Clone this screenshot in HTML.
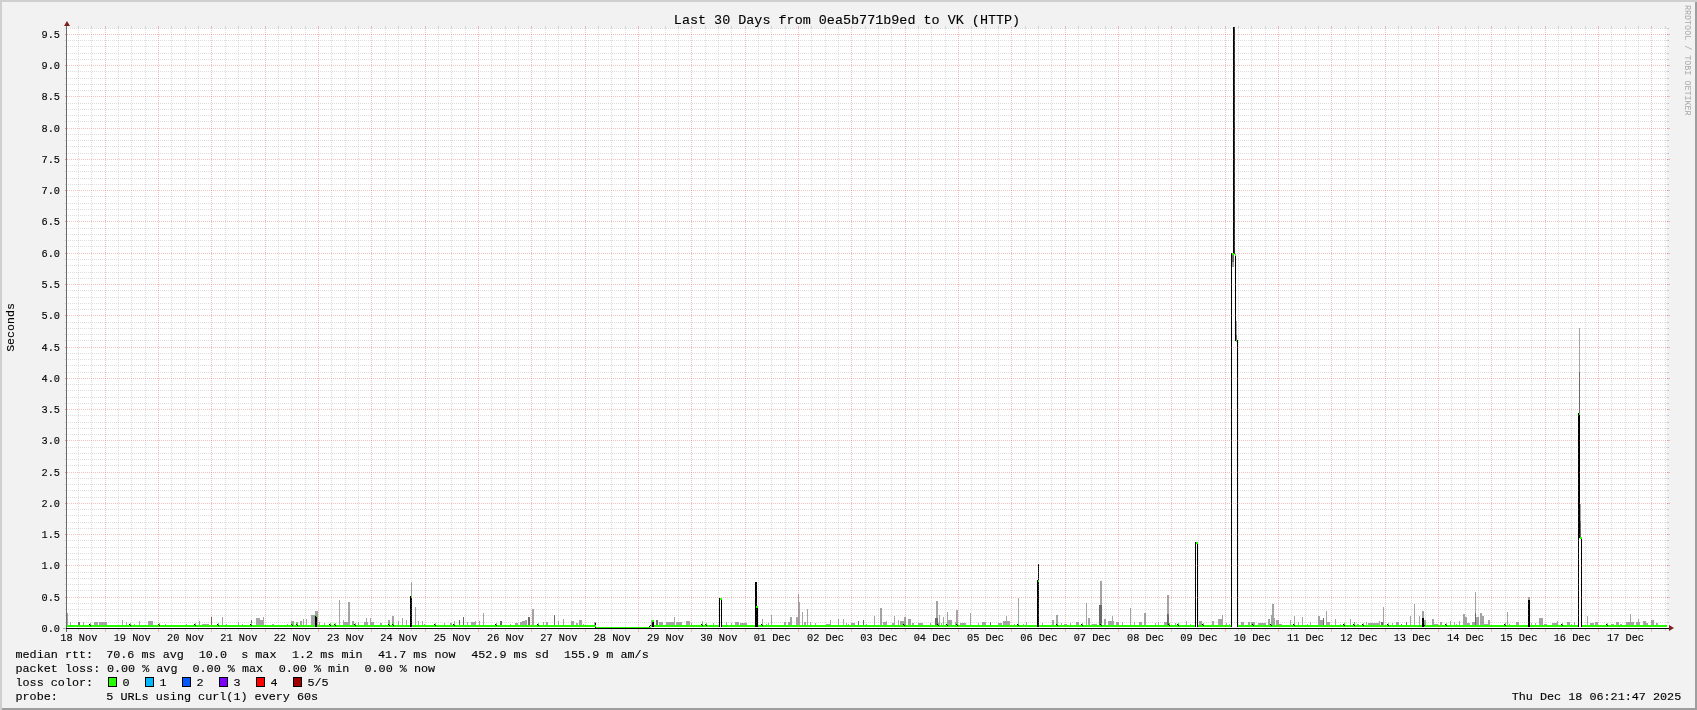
<!DOCTYPE html>
<html><head><meta charset="utf-8"><style>html,body{margin:0;padding:0;background:#f2f2f2;overflow:hidden}svg text{font-family:"Liberation Mono",monospace}svg{will-change:transform}</style></head>
<body><svg width="1697" height="710" viewBox="0 0 1697 710" shape-rendering="crispEdges" style="display:block">
<rect x="0" y="0" width="1697" height="710" fill="#f2f2f2"/>
<rect x="0" y="0" width="1697" height="2" fill="#cfcfcf"/>
<rect x="0" y="0" width="2" height="710" fill="#cfcfcf"/>
<rect x="1695" y="2" width="2" height="708" fill="#9e9e9e"/>
<rect x="2" y="708" width="1695" height="2" fill="#9e9e9e"/>
<rect x="67" y="28" width="1600" height="600" fill="#ffffff"/>
<rect x="67" y="613" width="1" height="12" fill="#a4a4a4"/><rect x="70" y="622" width="1" height="3" fill="#a4a4a4"/><rect x="83" y="622" width="1" height="3" fill="#a4a4a4"/><rect x="94" y="622" width="4" height="3" fill="#a4a4a4"/><rect x="99" y="622" width="8" height="3" fill="#a4a4a4"/><rect x="122" y="620" width="1" height="5" fill="#a4a4a4"/><rect x="126" y="622" width="1" height="3" fill="#a4a4a4"/><rect x="134" y="624" width="1" height="1" fill="#a4a4a4"/><rect x="139" y="621" width="1" height="4" fill="#a4a4a4"/><rect x="148" y="621" width="5" height="4" fill="#a4a4a4"/><rect x="165" y="624" width="1" height="1" fill="#a4a4a4"/><rect x="186" y="624" width="1" height="1" fill="#a4a4a4"/><rect x="199" y="621" width="1" height="4" fill="#a4a4a4"/><rect x="202" y="624" width="7" height="1" fill="#a4a4a4"/><rect x="222" y="617" width="1" height="8" fill="#a4a4a4"/><rect x="226" y="624" width="1" height="1" fill="#a4a4a4"/><rect x="238" y="622" width="1" height="3" fill="#a4a4a4"/><rect x="242" y="624" width="1" height="1" fill="#a4a4a4"/><rect x="256" y="618" width="4" height="7" fill="#a4a4a4"/><rect x="260" y="620" width="3" height="5" fill="#a4a4a4"/><rect x="263" y="617" width="1" height="8" fill="#a4a4a4"/><rect x="272" y="624" width="2" height="1" fill="#a4a4a4"/><rect x="287" y="624" width="1" height="1" fill="#a4a4a4"/><rect x="291" y="621" width="3" height="4" fill="#a4a4a4"/><rect x="296" y="622" width="2" height="3" fill="#a4a4a4"/><rect x="300" y="621" width="2" height="4" fill="#a4a4a4"/><rect x="303" y="619" width="1" height="6" fill="#a4a4a4"/><rect x="306" y="619" width="1" height="6" fill="#a4a4a4"/><rect x="311" y="615" width="4" height="10" fill="#a4a4a4"/><rect x="315" y="611" width="3" height="14" fill="#a4a4a4"/><rect x="319" y="622" width="1" height="3" fill="#a4a4a4"/><rect x="324" y="623" width="1" height="2" fill="#a4a4a4"/><rect x="339" y="600" width="1" height="25" fill="#a4a4a4"/><rect x="343" y="620" width="1" height="5" fill="#a4a4a4"/><rect x="344" y="622" width="4" height="3" fill="#a4a4a4"/><rect x="348" y="602" width="2" height="23" fill="#a4a4a4"/><rect x="352" y="621" width="2" height="4" fill="#a4a4a4"/><rect x="358" y="622" width="1" height="3" fill="#a4a4a4"/><rect x="364" y="622" width="4" height="3" fill="#a4a4a4"/><rect x="366" y="618" width="1" height="7" fill="#a4a4a4"/><rect x="370" y="618" width="1" height="7" fill="#a4a4a4"/><rect x="371" y="622" width="3" height="3" fill="#a4a4a4"/><rect x="380" y="623" width="2" height="2" fill="#a4a4a4"/><rect x="388" y="620" width="2" height="5" fill="#a4a4a4"/><rect x="392" y="616" width="2" height="9" fill="#a4a4a4"/><rect x="398" y="621" width="1" height="4" fill="#a4a4a4"/><rect x="402" y="618" width="1" height="7" fill="#a4a4a4"/><rect x="406" y="620" width="1" height="5" fill="#a4a4a4"/><rect x="411" y="582" width="1" height="43" fill="#a4a4a4"/><rect x="415" y="607" width="1" height="18" fill="#a4a4a4"/><rect x="418" y="621" width="1" height="4" fill="#a4a4a4"/><rect x="422" y="621" width="1" height="4" fill="#a4a4a4"/><rect x="424" y="624" width="1" height="1" fill="#a4a4a4"/><rect x="444" y="623" width="1" height="2" fill="#a4a4a4"/><rect x="450" y="623" width="2" height="2" fill="#a4a4a4"/><rect x="454" y="621" width="1" height="4" fill="#a4a4a4"/><rect x="467" y="622" width="1" height="3" fill="#a4a4a4"/><rect x="471" y="622" width="4" height="3" fill="#a4a4a4"/><rect x="475" y="621" width="1" height="4" fill="#a4a4a4"/><rect x="479" y="621" width="1" height="4" fill="#a4a4a4"/><rect x="483" y="613" width="1" height="12" fill="#a4a4a4"/><rect x="510" y="624" width="1" height="1" fill="#a4a4a4"/><rect x="515" y="623" width="3" height="2" fill="#a4a4a4"/><rect x="520" y="622" width="2" height="3" fill="#a4a4a4"/><rect x="522" y="621" width="3" height="4" fill="#a4a4a4"/><rect x="525" y="620" width="2" height="5" fill="#a4a4a4"/><rect x="532" y="609" width="2" height="16" fill="#a4a4a4"/><rect x="543" y="622" width="1" height="3" fill="#a4a4a4"/><rect x="546" y="622" width="2" height="3" fill="#a4a4a4"/><rect x="558" y="621" width="1" height="4" fill="#a4a4a4"/><rect x="563" y="619" width="1" height="6" fill="#a4a4a4"/><rect x="571" y="621" width="3" height="4" fill="#a4a4a4"/><rect x="576" y="623" width="2" height="2" fill="#a4a4a4"/><rect x="579" y="620" width="3" height="5" fill="#a4a4a4"/><rect x="583" y="624" width="1" height="1" fill="#a4a4a4"/><rect x="594" y="622" width="2" height="3" fill="#a4a4a4"/><rect x="651" y="620" width="3" height="5" fill="#a4a4a4"/><rect x="659" y="622" width="4" height="3" fill="#a4a4a4"/><rect x="666" y="622" width="8" height="3" fill="#a4a4a4"/><rect x="674" y="617" width="1" height="8" fill="#a4a4a4"/><rect x="676" y="622" width="6" height="3" fill="#a4a4a4"/><rect x="686" y="621" width="4" height="4" fill="#a4a4a4"/><rect x="691" y="623" width="1" height="2" fill="#a4a4a4"/><rect x="702" y="621" width="1" height="4" fill="#a4a4a4"/><rect x="713" y="623" width="1" height="2" fill="#a4a4a4"/><rect x="726" y="622" width="1" height="3" fill="#a4a4a4"/><rect x="731" y="623" width="1" height="2" fill="#a4a4a4"/><rect x="735" y="622" width="4" height="3" fill="#a4a4a4"/><rect x="740" y="623" width="7" height="2" fill="#a4a4a4"/><rect x="762" y="619" width="1" height="6" fill="#a4a4a4"/><rect x="766" y="624" width="1" height="1" fill="#a4a4a4"/><rect x="768" y="623" width="1" height="2" fill="#a4a4a4"/><rect x="771" y="615" width="1" height="10" fill="#a4a4a4"/><rect x="784" y="622" width="2" height="3" fill="#a4a4a4"/><rect x="788" y="622" width="2" height="3" fill="#a4a4a4"/><rect x="790" y="617" width="2" height="8" fill="#a4a4a4"/><rect x="796" y="617" width="2" height="8" fill="#a4a4a4"/><rect x="798" y="594" width="1" height="31" fill="#a4a4a4"/><rect x="799" y="602" width="1" height="23" fill="#a4a4a4"/><rect x="802" y="612" width="1" height="13" fill="#a4a4a4"/><rect x="804" y="622" width="2" height="3" fill="#a4a4a4"/><rect x="807" y="609" width="1" height="16" fill="#a4a4a4"/><rect x="810" y="622" width="1" height="3" fill="#a4a4a4"/><rect x="815" y="623" width="1" height="2" fill="#a4a4a4"/><rect x="826" y="624" width="4" height="1" fill="#a4a4a4"/><rect x="830" y="620" width="1" height="5" fill="#a4a4a4"/><rect x="838" y="619" width="1" height="6" fill="#a4a4a4"/><rect x="843" y="619" width="1" height="6" fill="#a4a4a4"/><rect x="846" y="623" width="1" height="2" fill="#a4a4a4"/><rect x="848" y="624" width="1" height="1" fill="#a4a4a4"/><rect x="851" y="623" width="4" height="2" fill="#a4a4a4"/><rect x="866" y="624" width="1" height="1" fill="#a4a4a4"/><rect x="874" y="616" width="1" height="9" fill="#a4a4a4"/><rect x="880" y="608" width="2" height="17" fill="#a4a4a4"/><rect x="883" y="622" width="4" height="3" fill="#a4a4a4"/><rect x="886" y="621" width="1" height="4" fill="#a4a4a4"/><rect x="892" y="623" width="2" height="2" fill="#a4a4a4"/><rect x="894" y="616" width="1" height="9" fill="#a4a4a4"/><rect x="898" y="620" width="1" height="5" fill="#a4a4a4"/><rect x="900" y="621" width="4" height="4" fill="#a4a4a4"/><rect x="904" y="617" width="2" height="8" fill="#a4a4a4"/><rect x="908" y="619" width="3" height="6" fill="#a4a4a4"/><rect x="912" y="623" width="2" height="2" fill="#a4a4a4"/><rect x="918" y="623" width="5" height="2" fill="#a4a4a4"/><rect x="930" y="623" width="1" height="2" fill="#a4a4a4"/><rect x="936" y="601" width="2" height="24" fill="#a4a4a4"/><rect x="939" y="615" width="1" height="10" fill="#a4a4a4"/><rect x="941" y="623" width="1" height="2" fill="#a4a4a4"/><rect x="943" y="617" width="1" height="8" fill="#a4a4a4"/><rect x="947" y="612" width="1" height="13" fill="#a4a4a4"/><rect x="947" y="620" width="5" height="5" fill="#a4a4a4"/><rect x="955" y="622" width="1" height="3" fill="#a4a4a4"/><rect x="956" y="610" width="2" height="15" fill="#a4a4a4"/><rect x="960" y="623" width="6" height="2" fill="#a4a4a4"/><rect x="970" y="613" width="1" height="12" fill="#a4a4a4"/><rect x="978" y="623" width="1" height="2" fill="#a4a4a4"/><rect x="982" y="622" width="4" height="3" fill="#a4a4a4"/><rect x="998" y="623" width="4" height="2" fill="#a4a4a4"/><rect x="1003" y="621" width="7" height="4" fill="#a4a4a4"/><rect x="1006" y="616" width="1" height="9" fill="#a4a4a4"/><rect x="1014" y="624" width="1" height="1" fill="#a4a4a4"/><rect x="1018" y="598" width="1" height="27" fill="#a4a4a4"/><rect x="1023" y="624" width="1" height="1" fill="#a4a4a4"/><rect x="1026" y="622" width="1" height="3" fill="#a4a4a4"/><rect x="1042" y="623" width="1" height="2" fill="#a4a4a4"/><rect x="1052" y="620" width="2" height="5" fill="#a4a4a4"/><rect x="1056" y="615" width="2" height="10" fill="#a4a4a4"/><rect x="1061" y="623" width="1" height="2" fill="#a4a4a4"/><rect x="1064" y="624" width="3" height="1" fill="#a4a4a4"/><rect x="1070" y="623" width="1" height="2" fill="#a4a4a4"/><rect x="1076" y="622" width="3" height="3" fill="#a4a4a4"/><rect x="1086" y="603" width="1" height="22" fill="#a4a4a4"/><rect x="1088" y="618" width="2" height="7" fill="#a4a4a4"/><rect x="1092" y="624" width="5" height="1" fill="#a4a4a4"/><rect x="1100" y="581" width="2" height="44" fill="#a4a4a4"/><rect x="1104" y="619" width="2" height="6" fill="#a4a4a4"/><rect x="1108" y="621" width="6" height="4" fill="#a4a4a4"/><rect x="1112" y="616" width="1" height="9" fill="#a4a4a4"/><rect x="1116" y="622" width="3" height="3" fill="#a4a4a4"/><rect x="1122" y="622" width="1" height="3" fill="#a4a4a4"/><rect x="1130" y="608" width="1" height="17" fill="#a4a4a4"/><rect x="1134" y="622" width="1" height="3" fill="#a4a4a4"/><rect x="1139" y="622" width="3" height="3" fill="#a4a4a4"/><rect x="1144" y="613" width="2" height="12" fill="#a4a4a4"/><rect x="1155" y="623" width="1" height="2" fill="#a4a4a4"/><rect x="1158" y="622" width="1" height="3" fill="#a4a4a4"/><rect x="1164" y="622" width="3" height="3" fill="#a4a4a4"/><rect x="1167" y="595" width="2" height="30" fill="#a4a4a4"/><rect x="1175" y="623" width="1" height="2" fill="#a4a4a4"/><rect x="1186" y="621" width="1" height="4" fill="#a4a4a4"/><rect x="1190" y="624" width="1" height="1" fill="#a4a4a4"/><rect x="1199" y="621" width="3" height="4" fill="#a4a4a4"/><rect x="1212" y="621" width="2" height="4" fill="#a4a4a4"/><rect x="1218" y="619" width="5" height="6" fill="#a4a4a4"/><rect x="1222" y="615" width="1" height="10" fill="#a4a4a4"/><rect x="1226" y="623" width="1" height="2" fill="#a4a4a4"/><rect x="1229" y="624" width="1" height="1" fill="#a4a4a4"/><rect x="1232" y="262" width="2" height="5" fill="#a4a4a4"/><rect x="1236" y="321" width="1" height="14" fill="#a4a4a4"/><rect x="1241" y="622" width="3" height="3" fill="#a4a4a4"/><rect x="1248" y="622" width="2" height="3" fill="#a4a4a4"/><rect x="1251" y="622" width="4" height="3" fill="#a4a4a4"/><rect x="1258" y="623" width="8" height="2" fill="#a4a4a4"/><rect x="1268" y="619" width="2" height="6" fill="#a4a4a4"/><rect x="1272" y="604" width="2" height="21" fill="#a4a4a4"/><rect x="1271" y="615" width="1" height="10" fill="#a4a4a4"/><rect x="1274" y="618" width="1" height="7" fill="#a4a4a4"/><rect x="1276" y="620" width="3" height="5" fill="#a4a4a4"/><rect x="1279" y="624" width="3" height="1" fill="#a4a4a4"/><rect x="1290" y="620" width="1" height="5" fill="#a4a4a4"/><rect x="1294" y="616" width="1" height="9" fill="#a4a4a4"/><rect x="1298" y="622" width="1" height="3" fill="#a4a4a4"/><rect x="1302" y="617" width="1" height="8" fill="#a4a4a4"/><rect x="1307" y="624" width="1" height="1" fill="#a4a4a4"/><rect x="1310" y="622" width="1" height="3" fill="#a4a4a4"/><rect x="1318" y="620" width="5" height="5" fill="#a4a4a4"/><rect x="1318" y="616" width="2" height="9" fill="#a4a4a4"/><rect x="1326" y="611" width="1" height="14" fill="#a4a4a4"/><rect x="1327" y="622" width="3" height="3" fill="#a4a4a4"/><rect x="1335" y="619" width="1" height="6" fill="#a4a4a4"/><rect x="1340" y="624" width="1" height="1" fill="#a4a4a4"/><rect x="1350" y="619" width="1" height="6" fill="#a4a4a4"/><rect x="1357" y="624" width="2" height="1" fill="#a4a4a4"/><rect x="1366" y="622" width="1" height="3" fill="#a4a4a4"/><rect x="1368" y="623" width="11" height="2" fill="#a4a4a4"/><rect x="1379" y="621" width="1" height="4" fill="#a4a4a4"/><rect x="1383" y="607" width="1" height="18" fill="#a4a4a4"/><rect x="1392" y="623" width="1" height="2" fill="#a4a4a4"/><rect x="1396" y="622" width="3" height="3" fill="#a4a4a4"/><rect x="1410" y="616" width="1" height="9" fill="#a4a4a4"/><rect x="1414" y="604" width="1" height="21" fill="#a4a4a4"/><rect x="1419" y="616" width="1" height="9" fill="#a4a4a4"/><rect x="1422" y="611" width="2" height="14" fill="#a4a4a4"/><rect x="1424" y="620" width="2" height="5" fill="#a4a4a4"/><rect x="1432" y="619" width="2" height="6" fill="#a4a4a4"/><rect x="1434" y="624" width="4" height="1" fill="#a4a4a4"/><rect x="1440" y="622" width="2" height="3" fill="#a4a4a4"/><rect x="1450" y="621" width="1" height="4" fill="#a4a4a4"/><rect x="1454" y="622" width="1" height="3" fill="#a4a4a4"/><rect x="1456" y="624" width="1" height="1" fill="#a4a4a4"/><rect x="1459" y="621" width="1" height="4" fill="#a4a4a4"/><rect x="1463" y="614" width="2" height="11" fill="#a4a4a4"/><rect x="1465" y="617" width="2" height="8" fill="#a4a4a4"/><rect x="1467" y="623" width="3" height="2" fill="#a4a4a4"/><rect x="1472" y="622" width="3" height="3" fill="#a4a4a4"/><rect x="1475" y="592" width="1" height="33" fill="#a4a4a4"/><rect x="1476" y="617" width="3" height="8" fill="#a4a4a4"/><rect x="1480" y="613" width="2" height="12" fill="#a4a4a4"/><rect x="1482" y="616" width="2" height="9" fill="#a4a4a4"/><rect x="1484" y="624" width="4" height="1" fill="#a4a4a4"/><rect x="1488" y="620" width="2" height="5" fill="#a4a4a4"/><rect x="1507" y="612" width="1" height="13" fill="#a4a4a4"/><rect x="1509" y="624" width="1" height="1" fill="#a4a4a4"/><rect x="1516" y="622" width="3" height="3" fill="#a4a4a4"/><rect x="1528" y="597" width="2" height="28" fill="#a4a4a4"/><rect x="1531" y="623" width="1" height="2" fill="#a4a4a4"/><rect x="1535" y="623" width="1" height="2" fill="#a4a4a4"/><rect x="1539" y="618" width="4" height="7" fill="#a4a4a4"/><rect x="1544" y="624" width="3" height="1" fill="#a4a4a4"/><rect x="1552" y="623" width="6" height="2" fill="#a4a4a4"/><rect x="1557" y="621" width="1" height="4" fill="#a4a4a4"/><rect x="1567" y="622" width="3" height="3" fill="#a4a4a4"/><rect x="1571" y="624" width="1" height="1" fill="#a4a4a4"/><rect x="1574" y="622" width="1" height="3" fill="#a4a4a4"/><rect x="1579" y="328" width="1" height="44" fill="#a4a4a4"/><rect x="1580" y="504" width="1" height="17" fill="#a4a4a4"/><rect x="1587" y="616" width="1" height="9" fill="#a4a4a4"/><rect x="1590" y="623" width="4" height="2" fill="#a4a4a4"/><rect x="1595" y="622" width="3" height="3" fill="#a4a4a4"/><rect x="1611" y="624" width="3" height="1" fill="#a4a4a4"/><rect x="1616" y="622" width="3" height="3" fill="#a4a4a4"/><rect x="1620" y="624" width="2" height="1" fill="#a4a4a4"/><rect x="1626" y="622" width="3" height="3" fill="#a4a4a4"/><rect x="1630" y="614" width="1" height="11" fill="#a4a4a4"/><rect x="1629" y="622" width="5" height="3" fill="#a4a4a4"/><rect x="1636" y="622" width="4" height="3" fill="#a4a4a4"/><rect x="1638" y="619" width="1" height="6" fill="#a4a4a4"/><rect x="1643" y="621" width="3" height="4" fill="#a4a4a4"/><rect x="1646" y="623" width="2" height="2" fill="#a4a4a4"/><rect x="1651" y="620" width="3" height="5" fill="#a4a4a4"/><rect x="1656" y="623" width="2" height="2" fill="#a4a4a4"/><rect x="78" y="622" width="2" height="3" fill="#6a6a6a"/><rect x="211" y="617" width="1" height="8" fill="#6a6a6a"/><rect x="251" y="620" width="1" height="5" fill="#6a6a6a"/><rect x="459" y="620" width="1" height="5" fill="#6a6a6a"/><rect x="463" y="617" width="1" height="8" fill="#6a6a6a"/><rect x="500" y="621" width="2" height="4" fill="#6a6a6a"/><rect x="528" y="617" width="2" height="8" fill="#6a6a6a"/><rect x="554" y="615" width="1" height="10" fill="#6a6a6a"/><rect x="656" y="620" width="2" height="5" fill="#6a6a6a"/><rect x="858" y="621" width="1" height="4" fill="#6a6a6a"/><rect x="863" y="620" width="1" height="5" fill="#6a6a6a"/><rect x="935" y="618" width="3" height="7" fill="#6a6a6a"/><rect x="990" y="622" width="1" height="3" fill="#6a6a6a"/><rect x="1099" y="605" width="3" height="20" fill="#6a6a6a"/><rect x="1167" y="614" width="2" height="11" fill="#6a6a6a"/><rect x="1232" y="255" width="2" height="7" fill="#6a6a6a"/><rect x="1236" y="335" width="1" height="5" fill="#6a6a6a"/><rect x="1323" y="618" width="1" height="7" fill="#6a6a6a"/><rect x="1354" y="622" width="1" height="3" fill="#6a6a6a"/><rect x="1381" y="622" width="2" height="3" fill="#6a6a6a"/><rect x="1401" y="624" width="1" height="1" fill="#6a6a6a"/><rect x="1406" y="622" width="1" height="3" fill="#6a6a6a"/><rect x="1475" y="613" width="1" height="12" fill="#6a6a6a"/><rect x="1579" y="372" width="1" height="41" fill="#6a6a6a"/><rect x="1580" y="521" width="1" height="16" fill="#6a6a6a"/><rect x="596" y="627" width="55" height="1" fill="#26ff00"/><rect x="595" y="623" width="1" height="5" fill="#000"/><rect x="649" y="626" width="1" height="1" fill="#000"/><rect x="650" y="625" width="1" height="1" fill="#000"/><rect x="67" y="625" width="529" height="2" fill="#26ff00"/><rect x="651" y="625" width="69" height="2" fill="#26ff00"/><rect x="721" y="625" width="475" height="2" fill="#26ff00"/><rect x="1197" y="625" width="35" height="2" fill="#26ff00"/><rect x="1237" y="625" width="342" height="2" fill="#26ff00"/><rect x="1581" y="625" width="86" height="2" fill="#26ff00"/><rect x="315" y="616" width="1" height="11" fill="#000"/><rect x="316" y="616" width="1" height="11" fill="#000"/><rect x="410" y="596" width="1" height="31" fill="#000"/><rect x="411" y="596" width="1" height="31" fill="#000"/><rect x="652" y="621" width="1" height="6" fill="#000"/><rect x="653" y="621" width="1" height="6" fill="#000"/><rect x="719" y="598" width="1" height="29" fill="#000"/><rect x="721" y="600" width="1" height="27" fill="#000"/><rect x="755" y="582" width="1" height="45" fill="#000"/><rect x="756" y="582" width="1" height="25" fill="#000"/><rect x="757" y="608" width="1" height="19" fill="#000"/><rect x="756" y="606" width="1" height="21" fill="#000"/><rect x="1038" y="564" width="1" height="17" fill="#000"/><rect x="1037" y="580" width="1" height="47" fill="#000"/><rect x="1038" y="580" width="1" height="47" fill="#000"/><rect x="1195" y="542" width="1" height="85" fill="#000"/><rect x="1197" y="544" width="1" height="83" fill="#000"/><rect x="1231" y="253" width="1" height="374" fill="#000"/><rect x="1233" y="27" width="1" height="227" fill="#000"/><rect x="1234" y="27" width="1" height="227" fill="#303030"/><rect x="1235" y="256" width="1" height="85" fill="#000"/><rect x="1237" y="340" width="1" height="287" fill="#000"/><rect x="1422" y="618" width="1" height="9" fill="#000"/><rect x="1423" y="618" width="1" height="9" fill="#000"/><rect x="1528" y="600" width="1" height="27" fill="#000"/><rect x="1529" y="600" width="1" height="27" fill="#000"/><rect x="1578" y="413" width="1" height="214" fill="#000"/><rect x="1579" y="415" width="1" height="123" fill="#000"/><rect x="1581" y="539" width="1" height="88" fill="#000"/><rect x="316" y="615" width="1" height="2" fill="#26ff00"/><rect x="411" y="596" width="1" height="2" fill="#26ff00"/><rect x="652" y="620" width="2" height="2" fill="#26ff00"/><rect x="720" y="598" width="2" height="2" fill="#26ff00"/><rect x="756" y="606" width="2" height="2" fill="#26ff00"/><rect x="1038" y="580" width="1" height="2" fill="#26ff00"/><rect x="1196" y="542" width="2" height="2" fill="#26ff00"/><rect x="1232" y="253" width="2" height="2" fill="#26ff00"/><rect x="1235" y="254" width="1" height="2" fill="#26ff00"/><rect x="1236" y="340" width="1" height="2" fill="#26ff00"/><rect x="1579" y="413" width="1" height="2" fill="#26ff00"/><rect x="1580" y="537" width="2" height="2" fill="#26ff00"/><rect x="90" y="623" width="1" height="2" fill="#26ff00"/><rect x="89" y="624" width="1" height="1" fill="#000"/><rect x="90" y="625" width="1" height="1" fill="#000"/><rect x="130" y="623" width="1" height="2" fill="#26ff00"/><rect x="129" y="624" width="1" height="1" fill="#000"/><rect x="130" y="625" width="1" height="1" fill="#000"/><rect x="159" y="623" width="1" height="2" fill="#26ff00"/><rect x="158" y="624" width="1" height="1" fill="#000"/><rect x="159" y="625" width="1" height="1" fill="#000"/><rect x="195" y="623" width="1" height="2" fill="#26ff00"/><rect x="194" y="624" width="1" height="1" fill="#000"/><rect x="195" y="625" width="1" height="1" fill="#000"/><rect x="218" y="623" width="1" height="2" fill="#26ff00"/><rect x="217" y="624" width="1" height="1" fill="#000"/><rect x="218" y="625" width="1" height="1" fill="#000"/><rect x="251" y="623" width="1" height="2" fill="#26ff00"/><rect x="250" y="624" width="1" height="1" fill="#000"/><rect x="251" y="625" width="1" height="1" fill="#000"/><rect x="292" y="623" width="1" height="2" fill="#26ff00"/><rect x="291" y="624" width="1" height="1" fill="#000"/><rect x="292" y="625" width="1" height="1" fill="#000"/><rect x="297" y="623" width="1" height="2" fill="#26ff00"/><rect x="296" y="624" width="1" height="1" fill="#000"/><rect x="297" y="625" width="1" height="1" fill="#000"/><rect x="330" y="623" width="1" height="2" fill="#26ff00"/><rect x="329" y="624" width="1" height="1" fill="#000"/><rect x="330" y="625" width="1" height="1" fill="#000"/><rect x="335" y="623" width="1" height="2" fill="#26ff00"/><rect x="334" y="624" width="1" height="1" fill="#000"/><rect x="335" y="625" width="1" height="1" fill="#000"/><rect x="355" y="623" width="1" height="2" fill="#26ff00"/><rect x="354" y="624" width="1" height="1" fill="#000"/><rect x="355" y="625" width="1" height="1" fill="#000"/><rect x="389" y="623" width="1" height="2" fill="#26ff00"/><rect x="388" y="624" width="1" height="1" fill="#000"/><rect x="389" y="625" width="1" height="1" fill="#000"/><rect x="393" y="623" width="1" height="2" fill="#26ff00"/><rect x="392" y="624" width="1" height="1" fill="#000"/><rect x="393" y="625" width="1" height="1" fill="#000"/><rect x="435" y="623" width="1" height="2" fill="#26ff00"/><rect x="434" y="624" width="1" height="1" fill="#000"/><rect x="435" y="625" width="1" height="1" fill="#000"/><rect x="454" y="623" width="1" height="2" fill="#26ff00"/><rect x="453" y="624" width="1" height="1" fill="#000"/><rect x="454" y="625" width="1" height="1" fill="#000"/><rect x="496" y="623" width="1" height="2" fill="#26ff00"/><rect x="495" y="624" width="1" height="1" fill="#000"/><rect x="496" y="625" width="1" height="1" fill="#000"/><rect x="538" y="623" width="1" height="2" fill="#26ff00"/><rect x="537" y="624" width="1" height="1" fill="#000"/><rect x="538" y="625" width="1" height="1" fill="#000"/><rect x="702" y="623" width="1" height="2" fill="#26ff00"/><rect x="701" y="624" width="1" height="1" fill="#000"/><rect x="702" y="625" width="1" height="1" fill="#000"/><rect x="706" y="623" width="1" height="2" fill="#26ff00"/><rect x="705" y="624" width="1" height="1" fill="#000"/><rect x="706" y="625" width="1" height="1" fill="#000"/><rect x="762" y="623" width="1" height="2" fill="#26ff00"/><rect x="761" y="624" width="1" height="1" fill="#000"/><rect x="762" y="625" width="1" height="1" fill="#000"/><rect x="1057" y="623" width="1" height="2" fill="#26ff00"/><rect x="1056" y="624" width="1" height="1" fill="#000"/><rect x="1057" y="625" width="1" height="1" fill="#000"/><rect x="1082" y="623" width="1" height="2" fill="#26ff00"/><rect x="1081" y="624" width="1" height="1" fill="#000"/><rect x="1082" y="625" width="1" height="1" fill="#000"/><rect x="1101" y="623" width="1" height="2" fill="#26ff00"/><rect x="1100" y="624" width="1" height="1" fill="#000"/><rect x="1101" y="625" width="1" height="1" fill="#000"/><rect x="1169" y="623" width="1" height="2" fill="#26ff00"/><rect x="1168" y="624" width="1" height="1" fill="#000"/><rect x="1169" y="625" width="1" height="1" fill="#000"/><rect x="1178" y="623" width="1" height="2" fill="#26ff00"/><rect x="1177" y="624" width="1" height="1" fill="#000"/><rect x="1178" y="625" width="1" height="1" fill="#000"/><rect x="1203" y="623" width="1" height="2" fill="#26ff00"/><rect x="1202" y="624" width="1" height="1" fill="#000"/><rect x="1203" y="625" width="1" height="1" fill="#000"/><rect x="1253" y="623" width="1" height="2" fill="#26ff00"/><rect x="1252" y="624" width="1" height="1" fill="#000"/><rect x="1253" y="625" width="1" height="1" fill="#000"/><rect x="1271" y="623" width="1" height="2" fill="#26ff00"/><rect x="1270" y="624" width="1" height="1" fill="#000"/><rect x="1271" y="625" width="1" height="1" fill="#000"/><rect x="1294" y="623" width="1" height="2" fill="#26ff00"/><rect x="1293" y="624" width="1" height="1" fill="#000"/><rect x="1294" y="625" width="1" height="1" fill="#000"/><rect x="1344" y="623" width="1" height="2" fill="#26ff00"/><rect x="1343" y="624" width="1" height="1" fill="#000"/><rect x="1344" y="625" width="1" height="1" fill="#000"/><rect x="1354" y="623" width="1" height="2" fill="#26ff00"/><rect x="1353" y="624" width="1" height="1" fill="#000"/><rect x="1354" y="625" width="1" height="1" fill="#000"/><rect x="1363" y="623" width="1" height="2" fill="#26ff00"/><rect x="1362" y="624" width="1" height="1" fill="#000"/><rect x="1363" y="625" width="1" height="1" fill="#000"/><rect x="1388" y="623" width="1" height="2" fill="#26ff00"/><rect x="1387" y="624" width="1" height="1" fill="#000"/><rect x="1388" y="625" width="1" height="1" fill="#000"/><rect x="1424" y="623" width="1" height="2" fill="#26ff00"/><rect x="1423" y="624" width="1" height="1" fill="#000"/><rect x="1424" y="625" width="1" height="1" fill="#000"/><rect x="1446" y="623" width="1" height="2" fill="#26ff00"/><rect x="1445" y="624" width="1" height="1" fill="#000"/><rect x="1446" y="625" width="1" height="1" fill="#000"/><rect x="1505" y="623" width="1" height="2" fill="#26ff00"/><rect x="1504" y="624" width="1" height="1" fill="#000"/><rect x="1505" y="625" width="1" height="1" fill="#000"/><rect x="1562" y="623" width="1" height="2" fill="#26ff00"/><rect x="1561" y="624" width="1" height="1" fill="#000"/><rect x="1562" y="625" width="1" height="1" fill="#000"/><rect x="1607" y="623" width="1" height="2" fill="#26ff00"/><rect x="1606" y="624" width="1" height="1" fill="#000"/><rect x="1607" y="625" width="1" height="1" fill="#000"/><rect x="904" y="623" width="1" height="2" fill="#26ff00"/><rect x="903" y="624" width="1" height="1" fill="#000"/><rect x="904" y="625" width="1" height="1" fill="#000"/><rect x="938" y="623" width="1" height="2" fill="#26ff00"/><rect x="937" y="624" width="1" height="1" fill="#000"/><rect x="938" y="625" width="1" height="1" fill="#000"/><rect x="947" y="623" width="1" height="2" fill="#26ff00"/><rect x="946" y="624" width="1" height="1" fill="#000"/><rect x="947" y="625" width="1" height="1" fill="#000"/><rect x="957" y="623" width="1" height="2" fill="#26ff00"/><rect x="956" y="624" width="1" height="1" fill="#000"/><rect x="957" y="625" width="1" height="1" fill="#000"/><rect x="1018" y="623" width="1" height="2" fill="#26ff00"/><rect x="1017" y="624" width="1" height="1" fill="#000"/><rect x="1018" y="625" width="1" height="1" fill="#000"/>
<g><line x1="66" y1="622.5" x2="1669" y2="622.5" stroke="rgba(143,143,143,0.30)" stroke-dasharray="1 1"/><rect x="65" y="622" width="2" height="1" fill="rgba(143,143,143,0.30)"/><rect x="1667" y="622" width="2" height="1" fill="rgba(143,143,143,0.30)"/><line x1="66" y1="615.5" x2="1669" y2="615.5" stroke="rgba(143,143,143,0.30)" stroke-dasharray="1 1"/><rect x="65" y="615" width="2" height="1" fill="rgba(143,143,143,0.30)"/><rect x="1667" y="615" width="2" height="1" fill="rgba(143,143,143,0.30)"/><line x1="66" y1="609.5" x2="1669" y2="609.5" stroke="rgba(143,143,143,0.30)" stroke-dasharray="1 1"/><rect x="65" y="609" width="2" height="1" fill="rgba(143,143,143,0.30)"/><rect x="1667" y="609" width="2" height="1" fill="rgba(143,143,143,0.30)"/><line x1="66" y1="603.5" x2="1669" y2="603.5" stroke="rgba(143,143,143,0.30)" stroke-dasharray="1 1"/><rect x="65" y="603" width="2" height="1" fill="rgba(143,143,143,0.30)"/><rect x="1667" y="603" width="2" height="1" fill="rgba(143,143,143,0.30)"/><line x1="65" y1="597.5" x2="1670" y2="597.5" stroke="rgba(222,79,79,0.36)" stroke-dasharray="1 1"/><rect x="65" y="597" width="2" height="1" fill="rgba(222,79,79,0.36)"/><rect x="1667" y="597" width="2" height="1" fill="rgba(222,79,79,0.36)"/><line x1="66" y1="590.5" x2="1669" y2="590.5" stroke="rgba(143,143,143,0.30)" stroke-dasharray="1 1"/><rect x="65" y="590" width="2" height="1" fill="rgba(143,143,143,0.30)"/><rect x="1667" y="590" width="2" height="1" fill="rgba(143,143,143,0.30)"/><line x1="66" y1="584.5" x2="1669" y2="584.5" stroke="rgba(143,143,143,0.30)" stroke-dasharray="1 1"/><rect x="65" y="584" width="2" height="1" fill="rgba(143,143,143,0.30)"/><rect x="1667" y="584" width="2" height="1" fill="rgba(143,143,143,0.30)"/><line x1="66" y1="578.5" x2="1669" y2="578.5" stroke="rgba(143,143,143,0.30)" stroke-dasharray="1 1"/><rect x="65" y="578" width="2" height="1" fill="rgba(143,143,143,0.30)"/><rect x="1667" y="578" width="2" height="1" fill="rgba(143,143,143,0.30)"/><line x1="66" y1="572.5" x2="1669" y2="572.5" stroke="rgba(143,143,143,0.30)" stroke-dasharray="1 1"/><rect x="65" y="572" width="2" height="1" fill="rgba(143,143,143,0.30)"/><rect x="1667" y="572" width="2" height="1" fill="rgba(143,143,143,0.30)"/><line x1="65" y1="565.5" x2="1670" y2="565.5" stroke="rgba(222,79,79,0.36)" stroke-dasharray="1 1"/><rect x="65" y="565" width="2" height="1" fill="rgba(222,79,79,0.36)"/><rect x="1667" y="565" width="2" height="1" fill="rgba(222,79,79,0.36)"/><line x1="66" y1="559.5" x2="1669" y2="559.5" stroke="rgba(143,143,143,0.30)" stroke-dasharray="1 1"/><rect x="65" y="559" width="2" height="1" fill="rgba(143,143,143,0.30)"/><rect x="1667" y="559" width="2" height="1" fill="rgba(143,143,143,0.30)"/><line x1="66" y1="553.5" x2="1669" y2="553.5" stroke="rgba(143,143,143,0.30)" stroke-dasharray="1 1"/><rect x="65" y="553" width="2" height="1" fill="rgba(143,143,143,0.30)"/><rect x="1667" y="553" width="2" height="1" fill="rgba(143,143,143,0.30)"/><line x1="66" y1="547.5" x2="1669" y2="547.5" stroke="rgba(143,143,143,0.30)" stroke-dasharray="1 1"/><rect x="65" y="547" width="2" height="1" fill="rgba(143,143,143,0.30)"/><rect x="1667" y="547" width="2" height="1" fill="rgba(143,143,143,0.30)"/><line x1="66" y1="540.5" x2="1669" y2="540.5" stroke="rgba(143,143,143,0.30)" stroke-dasharray="1 1"/><rect x="65" y="540" width="2" height="1" fill="rgba(143,143,143,0.30)"/><rect x="1667" y="540" width="2" height="1" fill="rgba(143,143,143,0.30)"/><line x1="65" y1="534.5" x2="1670" y2="534.5" stroke="rgba(222,79,79,0.36)" stroke-dasharray="1 1"/><rect x="65" y="534" width="2" height="1" fill="rgba(222,79,79,0.36)"/><rect x="1667" y="534" width="2" height="1" fill="rgba(222,79,79,0.36)"/><line x1="66" y1="528.5" x2="1669" y2="528.5" stroke="rgba(143,143,143,0.30)" stroke-dasharray="1 1"/><rect x="65" y="528" width="2" height="1" fill="rgba(143,143,143,0.30)"/><rect x="1667" y="528" width="2" height="1" fill="rgba(143,143,143,0.30)"/><line x1="66" y1="522.5" x2="1669" y2="522.5" stroke="rgba(143,143,143,0.30)" stroke-dasharray="1 1"/><rect x="65" y="522" width="2" height="1" fill="rgba(143,143,143,0.30)"/><rect x="1667" y="522" width="2" height="1" fill="rgba(143,143,143,0.30)"/><line x1="66" y1="515.5" x2="1669" y2="515.5" stroke="rgba(143,143,143,0.30)" stroke-dasharray="1 1"/><rect x="65" y="515" width="2" height="1" fill="rgba(143,143,143,0.30)"/><rect x="1667" y="515" width="2" height="1" fill="rgba(143,143,143,0.30)"/><line x1="66" y1="509.5" x2="1669" y2="509.5" stroke="rgba(143,143,143,0.30)" stroke-dasharray="1 1"/><rect x="65" y="509" width="2" height="1" fill="rgba(143,143,143,0.30)"/><rect x="1667" y="509" width="2" height="1" fill="rgba(143,143,143,0.30)"/><line x1="65" y1="503.5" x2="1670" y2="503.5" stroke="rgba(222,79,79,0.36)" stroke-dasharray="1 1"/><rect x="65" y="503" width="2" height="1" fill="rgba(222,79,79,0.36)"/><rect x="1667" y="503" width="2" height="1" fill="rgba(222,79,79,0.36)"/><line x1="66" y1="497.5" x2="1669" y2="497.5" stroke="rgba(143,143,143,0.30)" stroke-dasharray="1 1"/><rect x="65" y="497" width="2" height="1" fill="rgba(143,143,143,0.30)"/><rect x="1667" y="497" width="2" height="1" fill="rgba(143,143,143,0.30)"/><line x1="66" y1="490.5" x2="1669" y2="490.5" stroke="rgba(143,143,143,0.30)" stroke-dasharray="1 1"/><rect x="65" y="490" width="2" height="1" fill="rgba(143,143,143,0.30)"/><rect x="1667" y="490" width="2" height="1" fill="rgba(143,143,143,0.30)"/><line x1="66" y1="484.5" x2="1669" y2="484.5" stroke="rgba(143,143,143,0.30)" stroke-dasharray="1 1"/><rect x="65" y="484" width="2" height="1" fill="rgba(143,143,143,0.30)"/><rect x="1667" y="484" width="2" height="1" fill="rgba(143,143,143,0.30)"/><line x1="66" y1="478.5" x2="1669" y2="478.5" stroke="rgba(143,143,143,0.30)" stroke-dasharray="1 1"/><rect x="65" y="478" width="2" height="1" fill="rgba(143,143,143,0.30)"/><rect x="1667" y="478" width="2" height="1" fill="rgba(143,143,143,0.30)"/><line x1="65" y1="472.5" x2="1670" y2="472.5" stroke="rgba(222,79,79,0.36)" stroke-dasharray="1 1"/><rect x="65" y="472" width="2" height="1" fill="rgba(222,79,79,0.36)"/><rect x="1667" y="472" width="2" height="1" fill="rgba(222,79,79,0.36)"/><line x1="66" y1="465.5" x2="1669" y2="465.5" stroke="rgba(143,143,143,0.30)" stroke-dasharray="1 1"/><rect x="65" y="465" width="2" height="1" fill="rgba(143,143,143,0.30)"/><rect x="1667" y="465" width="2" height="1" fill="rgba(143,143,143,0.30)"/><line x1="66" y1="459.5" x2="1669" y2="459.5" stroke="rgba(143,143,143,0.30)" stroke-dasharray="1 1"/><rect x="65" y="459" width="2" height="1" fill="rgba(143,143,143,0.30)"/><rect x="1667" y="459" width="2" height="1" fill="rgba(143,143,143,0.30)"/><line x1="66" y1="453.5" x2="1669" y2="453.5" stroke="rgba(143,143,143,0.30)" stroke-dasharray="1 1"/><rect x="65" y="453" width="2" height="1" fill="rgba(143,143,143,0.30)"/><rect x="1667" y="453" width="2" height="1" fill="rgba(143,143,143,0.30)"/><line x1="66" y1="447.5" x2="1669" y2="447.5" stroke="rgba(143,143,143,0.30)" stroke-dasharray="1 1"/><rect x="65" y="447" width="2" height="1" fill="rgba(143,143,143,0.30)"/><rect x="1667" y="447" width="2" height="1" fill="rgba(143,143,143,0.30)"/><line x1="65" y1="440.5" x2="1670" y2="440.5" stroke="rgba(222,79,79,0.36)" stroke-dasharray="1 1"/><rect x="65" y="440" width="2" height="1" fill="rgba(222,79,79,0.36)"/><rect x="1667" y="440" width="2" height="1" fill="rgba(222,79,79,0.36)"/><line x1="66" y1="434.5" x2="1669" y2="434.5" stroke="rgba(143,143,143,0.30)" stroke-dasharray="1 1"/><rect x="65" y="434" width="2" height="1" fill="rgba(143,143,143,0.30)"/><rect x="1667" y="434" width="2" height="1" fill="rgba(143,143,143,0.30)"/><line x1="66" y1="428.5" x2="1669" y2="428.5" stroke="rgba(143,143,143,0.30)" stroke-dasharray="1 1"/><rect x="65" y="428" width="2" height="1" fill="rgba(143,143,143,0.30)"/><rect x="1667" y="428" width="2" height="1" fill="rgba(143,143,143,0.30)"/><line x1="66" y1="422.5" x2="1669" y2="422.5" stroke="rgba(143,143,143,0.30)" stroke-dasharray="1 1"/><rect x="65" y="422" width="2" height="1" fill="rgba(143,143,143,0.30)"/><rect x="1667" y="422" width="2" height="1" fill="rgba(143,143,143,0.30)"/><line x1="66" y1="415.5" x2="1669" y2="415.5" stroke="rgba(143,143,143,0.30)" stroke-dasharray="1 1"/><rect x="65" y="415" width="2" height="1" fill="rgba(143,143,143,0.30)"/><rect x="1667" y="415" width="2" height="1" fill="rgba(143,143,143,0.30)"/><line x1="65" y1="409.5" x2="1670" y2="409.5" stroke="rgba(222,79,79,0.36)" stroke-dasharray="1 1"/><rect x="65" y="409" width="2" height="1" fill="rgba(222,79,79,0.36)"/><rect x="1667" y="409" width="2" height="1" fill="rgba(222,79,79,0.36)"/><line x1="66" y1="403.5" x2="1669" y2="403.5" stroke="rgba(143,143,143,0.30)" stroke-dasharray="1 1"/><rect x="65" y="403" width="2" height="1" fill="rgba(143,143,143,0.30)"/><rect x="1667" y="403" width="2" height="1" fill="rgba(143,143,143,0.30)"/><line x1="66" y1="397.5" x2="1669" y2="397.5" stroke="rgba(143,143,143,0.30)" stroke-dasharray="1 1"/><rect x="65" y="397" width="2" height="1" fill="rgba(143,143,143,0.30)"/><rect x="1667" y="397" width="2" height="1" fill="rgba(143,143,143,0.30)"/><line x1="66" y1="390.5" x2="1669" y2="390.5" stroke="rgba(143,143,143,0.30)" stroke-dasharray="1 1"/><rect x="65" y="390" width="2" height="1" fill="rgba(143,143,143,0.30)"/><rect x="1667" y="390" width="2" height="1" fill="rgba(143,143,143,0.30)"/><line x1="66" y1="384.5" x2="1669" y2="384.5" stroke="rgba(143,143,143,0.30)" stroke-dasharray="1 1"/><rect x="65" y="384" width="2" height="1" fill="rgba(143,143,143,0.30)"/><rect x="1667" y="384" width="2" height="1" fill="rgba(143,143,143,0.30)"/><line x1="65" y1="378.5" x2="1670" y2="378.5" stroke="rgba(222,79,79,0.36)" stroke-dasharray="1 1"/><rect x="65" y="378" width="2" height="1" fill="rgba(222,79,79,0.36)"/><rect x="1667" y="378" width="2" height="1" fill="rgba(222,79,79,0.36)"/><line x1="66" y1="372.5" x2="1669" y2="372.5" stroke="rgba(143,143,143,0.30)" stroke-dasharray="1 1"/><rect x="65" y="372" width="2" height="1" fill="rgba(143,143,143,0.30)"/><rect x="1667" y="372" width="2" height="1" fill="rgba(143,143,143,0.30)"/><line x1="66" y1="365.5" x2="1669" y2="365.5" stroke="rgba(143,143,143,0.30)" stroke-dasharray="1 1"/><rect x="65" y="365" width="2" height="1" fill="rgba(143,143,143,0.30)"/><rect x="1667" y="365" width="2" height="1" fill="rgba(143,143,143,0.30)"/><line x1="66" y1="359.5" x2="1669" y2="359.5" stroke="rgba(143,143,143,0.30)" stroke-dasharray="1 1"/><rect x="65" y="359" width="2" height="1" fill="rgba(143,143,143,0.30)"/><rect x="1667" y="359" width="2" height="1" fill="rgba(143,143,143,0.30)"/><line x1="66" y1="353.5" x2="1669" y2="353.5" stroke="rgba(143,143,143,0.30)" stroke-dasharray="1 1"/><rect x="65" y="353" width="2" height="1" fill="rgba(143,143,143,0.30)"/><rect x="1667" y="353" width="2" height="1" fill="rgba(143,143,143,0.30)"/><line x1="65" y1="347.5" x2="1670" y2="347.5" stroke="rgba(222,79,79,0.36)" stroke-dasharray="1 1"/><rect x="65" y="347" width="2" height="1" fill="rgba(222,79,79,0.36)"/><rect x="1667" y="347" width="2" height="1" fill="rgba(222,79,79,0.36)"/><line x1="66" y1="340.5" x2="1669" y2="340.5" stroke="rgba(143,143,143,0.30)" stroke-dasharray="1 1"/><rect x="65" y="340" width="2" height="1" fill="rgba(143,143,143,0.30)"/><rect x="1667" y="340" width="2" height="1" fill="rgba(143,143,143,0.30)"/><line x1="66" y1="334.5" x2="1669" y2="334.5" stroke="rgba(143,143,143,0.30)" stroke-dasharray="1 1"/><rect x="65" y="334" width="2" height="1" fill="rgba(143,143,143,0.30)"/><rect x="1667" y="334" width="2" height="1" fill="rgba(143,143,143,0.30)"/><line x1="66" y1="328.5" x2="1669" y2="328.5" stroke="rgba(143,143,143,0.30)" stroke-dasharray="1 1"/><rect x="65" y="328" width="2" height="1" fill="rgba(143,143,143,0.30)"/><rect x="1667" y="328" width="2" height="1" fill="rgba(143,143,143,0.30)"/><line x1="66" y1="322.5" x2="1669" y2="322.5" stroke="rgba(143,143,143,0.30)" stroke-dasharray="1 1"/><rect x="65" y="322" width="2" height="1" fill="rgba(143,143,143,0.30)"/><rect x="1667" y="322" width="2" height="1" fill="rgba(143,143,143,0.30)"/><line x1="65" y1="315.5" x2="1670" y2="315.5" stroke="rgba(222,79,79,0.36)" stroke-dasharray="1 1"/><rect x="65" y="315" width="2" height="1" fill="rgba(222,79,79,0.36)"/><rect x="1667" y="315" width="2" height="1" fill="rgba(222,79,79,0.36)"/><line x1="66" y1="309.5" x2="1669" y2="309.5" stroke="rgba(143,143,143,0.30)" stroke-dasharray="1 1"/><rect x="65" y="309" width="2" height="1" fill="rgba(143,143,143,0.30)"/><rect x="1667" y="309" width="2" height="1" fill="rgba(143,143,143,0.30)"/><line x1="66" y1="303.5" x2="1669" y2="303.5" stroke="rgba(143,143,143,0.30)" stroke-dasharray="1 1"/><rect x="65" y="303" width="2" height="1" fill="rgba(143,143,143,0.30)"/><rect x="1667" y="303" width="2" height="1" fill="rgba(143,143,143,0.30)"/><line x1="66" y1="297.5" x2="1669" y2="297.5" stroke="rgba(143,143,143,0.30)" stroke-dasharray="1 1"/><rect x="65" y="297" width="2" height="1" fill="rgba(143,143,143,0.30)"/><rect x="1667" y="297" width="2" height="1" fill="rgba(143,143,143,0.30)"/><line x1="66" y1="290.5" x2="1669" y2="290.5" stroke="rgba(143,143,143,0.30)" stroke-dasharray="1 1"/><rect x="65" y="290" width="2" height="1" fill="rgba(143,143,143,0.30)"/><rect x="1667" y="290" width="2" height="1" fill="rgba(143,143,143,0.30)"/><line x1="65" y1="284.5" x2="1670" y2="284.5" stroke="rgba(222,79,79,0.36)" stroke-dasharray="1 1"/><rect x="65" y="284" width="2" height="1" fill="rgba(222,79,79,0.36)"/><rect x="1667" y="284" width="2" height="1" fill="rgba(222,79,79,0.36)"/><line x1="66" y1="278.5" x2="1669" y2="278.5" stroke="rgba(143,143,143,0.30)" stroke-dasharray="1 1"/><rect x="65" y="278" width="2" height="1" fill="rgba(143,143,143,0.30)"/><rect x="1667" y="278" width="2" height="1" fill="rgba(143,143,143,0.30)"/><line x1="66" y1="272.5" x2="1669" y2="272.5" stroke="rgba(143,143,143,0.30)" stroke-dasharray="1 1"/><rect x="65" y="272" width="2" height="1" fill="rgba(143,143,143,0.30)"/><rect x="1667" y="272" width="2" height="1" fill="rgba(143,143,143,0.30)"/><line x1="66" y1="265.5" x2="1669" y2="265.5" stroke="rgba(143,143,143,0.30)" stroke-dasharray="1 1"/><rect x="65" y="265" width="2" height="1" fill="rgba(143,143,143,0.30)"/><rect x="1667" y="265" width="2" height="1" fill="rgba(143,143,143,0.30)"/><line x1="66" y1="259.5" x2="1669" y2="259.5" stroke="rgba(143,143,143,0.30)" stroke-dasharray="1 1"/><rect x="65" y="259" width="2" height="1" fill="rgba(143,143,143,0.30)"/><rect x="1667" y="259" width="2" height="1" fill="rgba(143,143,143,0.30)"/><line x1="65" y1="253.5" x2="1670" y2="253.5" stroke="rgba(222,79,79,0.36)" stroke-dasharray="1 1"/><rect x="65" y="253" width="2" height="1" fill="rgba(222,79,79,0.36)"/><rect x="1667" y="253" width="2" height="1" fill="rgba(222,79,79,0.36)"/><line x1="66" y1="246.5" x2="1669" y2="246.5" stroke="rgba(143,143,143,0.30)" stroke-dasharray="1 1"/><rect x="65" y="246" width="2" height="1" fill="rgba(143,143,143,0.30)"/><rect x="1667" y="246" width="2" height="1" fill="rgba(143,143,143,0.30)"/><line x1="66" y1="240.5" x2="1669" y2="240.5" stroke="rgba(143,143,143,0.30)" stroke-dasharray="1 1"/><rect x="65" y="240" width="2" height="1" fill="rgba(143,143,143,0.30)"/><rect x="1667" y="240" width="2" height="1" fill="rgba(143,143,143,0.30)"/><line x1="66" y1="234.5" x2="1669" y2="234.5" stroke="rgba(143,143,143,0.30)" stroke-dasharray="1 1"/><rect x="65" y="234" width="2" height="1" fill="rgba(143,143,143,0.30)"/><rect x="1667" y="234" width="2" height="1" fill="rgba(143,143,143,0.30)"/><line x1="66" y1="228.5" x2="1669" y2="228.5" stroke="rgba(143,143,143,0.30)" stroke-dasharray="1 1"/><rect x="65" y="228" width="2" height="1" fill="rgba(143,143,143,0.30)"/><rect x="1667" y="228" width="2" height="1" fill="rgba(143,143,143,0.30)"/><line x1="65" y1="221.5" x2="1670" y2="221.5" stroke="rgba(222,79,79,0.36)" stroke-dasharray="1 1"/><rect x="65" y="221" width="2" height="1" fill="rgba(222,79,79,0.36)"/><rect x="1667" y="221" width="2" height="1" fill="rgba(222,79,79,0.36)"/><line x1="66" y1="215.5" x2="1669" y2="215.5" stroke="rgba(143,143,143,0.30)" stroke-dasharray="1 1"/><rect x="65" y="215" width="2" height="1" fill="rgba(143,143,143,0.30)"/><rect x="1667" y="215" width="2" height="1" fill="rgba(143,143,143,0.30)"/><line x1="66" y1="209.5" x2="1669" y2="209.5" stroke="rgba(143,143,143,0.30)" stroke-dasharray="1 1"/><rect x="65" y="209" width="2" height="1" fill="rgba(143,143,143,0.30)"/><rect x="1667" y="209" width="2" height="1" fill="rgba(143,143,143,0.30)"/><line x1="66" y1="203.5" x2="1669" y2="203.5" stroke="rgba(143,143,143,0.30)" stroke-dasharray="1 1"/><rect x="65" y="203" width="2" height="1" fill="rgba(143,143,143,0.30)"/><rect x="1667" y="203" width="2" height="1" fill="rgba(143,143,143,0.30)"/><line x1="66" y1="196.5" x2="1669" y2="196.5" stroke="rgba(143,143,143,0.30)" stroke-dasharray="1 1"/><rect x="65" y="196" width="2" height="1" fill="rgba(143,143,143,0.30)"/><rect x="1667" y="196" width="2" height="1" fill="rgba(143,143,143,0.30)"/><line x1="65" y1="190.5" x2="1670" y2="190.5" stroke="rgba(222,79,79,0.36)" stroke-dasharray="1 1"/><rect x="65" y="190" width="2" height="1" fill="rgba(222,79,79,0.36)"/><rect x="1667" y="190" width="2" height="1" fill="rgba(222,79,79,0.36)"/><line x1="66" y1="184.5" x2="1669" y2="184.5" stroke="rgba(143,143,143,0.30)" stroke-dasharray="1 1"/><rect x="65" y="184" width="2" height="1" fill="rgba(143,143,143,0.30)"/><rect x="1667" y="184" width="2" height="1" fill="rgba(143,143,143,0.30)"/><line x1="66" y1="178.5" x2="1669" y2="178.5" stroke="rgba(143,143,143,0.30)" stroke-dasharray="1 1"/><rect x="65" y="178" width="2" height="1" fill="rgba(143,143,143,0.30)"/><rect x="1667" y="178" width="2" height="1" fill="rgba(143,143,143,0.30)"/><line x1="66" y1="171.5" x2="1669" y2="171.5" stroke="rgba(143,143,143,0.30)" stroke-dasharray="1 1"/><rect x="65" y="171" width="2" height="1" fill="rgba(143,143,143,0.30)"/><rect x="1667" y="171" width="2" height="1" fill="rgba(143,143,143,0.30)"/><line x1="66" y1="165.5" x2="1669" y2="165.5" stroke="rgba(143,143,143,0.30)" stroke-dasharray="1 1"/><rect x="65" y="165" width="2" height="1" fill="rgba(143,143,143,0.30)"/><rect x="1667" y="165" width="2" height="1" fill="rgba(143,143,143,0.30)"/><line x1="65" y1="159.5" x2="1670" y2="159.5" stroke="rgba(222,79,79,0.36)" stroke-dasharray="1 1"/><rect x="65" y="159" width="2" height="1" fill="rgba(222,79,79,0.36)"/><rect x="1667" y="159" width="2" height="1" fill="rgba(222,79,79,0.36)"/><line x1="66" y1="153.5" x2="1669" y2="153.5" stroke="rgba(143,143,143,0.30)" stroke-dasharray="1 1"/><rect x="65" y="153" width="2" height="1" fill="rgba(143,143,143,0.30)"/><rect x="1667" y="153" width="2" height="1" fill="rgba(143,143,143,0.30)"/><line x1="66" y1="146.5" x2="1669" y2="146.5" stroke="rgba(143,143,143,0.30)" stroke-dasharray="1 1"/><rect x="65" y="146" width="2" height="1" fill="rgba(143,143,143,0.30)"/><rect x="1667" y="146" width="2" height="1" fill="rgba(143,143,143,0.30)"/><line x1="66" y1="140.5" x2="1669" y2="140.5" stroke="rgba(143,143,143,0.30)" stroke-dasharray="1 1"/><rect x="65" y="140" width="2" height="1" fill="rgba(143,143,143,0.30)"/><rect x="1667" y="140" width="2" height="1" fill="rgba(143,143,143,0.30)"/><line x1="66" y1="134.5" x2="1669" y2="134.5" stroke="rgba(143,143,143,0.30)" stroke-dasharray="1 1"/><rect x="65" y="134" width="2" height="1" fill="rgba(143,143,143,0.30)"/><rect x="1667" y="134" width="2" height="1" fill="rgba(143,143,143,0.30)"/><line x1="65" y1="128.5" x2="1670" y2="128.5" stroke="rgba(222,79,79,0.36)" stroke-dasharray="1 1"/><rect x="65" y="128" width="2" height="1" fill="rgba(222,79,79,0.36)"/><rect x="1667" y="128" width="2" height="1" fill="rgba(222,79,79,0.36)"/><line x1="66" y1="121.5" x2="1669" y2="121.5" stroke="rgba(143,143,143,0.30)" stroke-dasharray="1 1"/><rect x="65" y="121" width="2" height="1" fill="rgba(143,143,143,0.30)"/><rect x="1667" y="121" width="2" height="1" fill="rgba(143,143,143,0.30)"/><line x1="66" y1="115.5" x2="1669" y2="115.5" stroke="rgba(143,143,143,0.30)" stroke-dasharray="1 1"/><rect x="65" y="115" width="2" height="1" fill="rgba(143,143,143,0.30)"/><rect x="1667" y="115" width="2" height="1" fill="rgba(143,143,143,0.30)"/><line x1="66" y1="109.5" x2="1669" y2="109.5" stroke="rgba(143,143,143,0.30)" stroke-dasharray="1 1"/><rect x="65" y="109" width="2" height="1" fill="rgba(143,143,143,0.30)"/><rect x="1667" y="109" width="2" height="1" fill="rgba(143,143,143,0.30)"/><line x1="66" y1="103.5" x2="1669" y2="103.5" stroke="rgba(143,143,143,0.30)" stroke-dasharray="1 1"/><rect x="65" y="103" width="2" height="1" fill="rgba(143,143,143,0.30)"/><rect x="1667" y="103" width="2" height="1" fill="rgba(143,143,143,0.30)"/><line x1="65" y1="96.5" x2="1670" y2="96.5" stroke="rgba(222,79,79,0.36)" stroke-dasharray="1 1"/><rect x="65" y="96" width="2" height="1" fill="rgba(222,79,79,0.36)"/><rect x="1667" y="96" width="2" height="1" fill="rgba(222,79,79,0.36)"/><line x1="66" y1="90.5" x2="1669" y2="90.5" stroke="rgba(143,143,143,0.30)" stroke-dasharray="1 1"/><rect x="65" y="90" width="2" height="1" fill="rgba(143,143,143,0.30)"/><rect x="1667" y="90" width="2" height="1" fill="rgba(143,143,143,0.30)"/><line x1="66" y1="84.5" x2="1669" y2="84.5" stroke="rgba(143,143,143,0.30)" stroke-dasharray="1 1"/><rect x="65" y="84" width="2" height="1" fill="rgba(143,143,143,0.30)"/><rect x="1667" y="84" width="2" height="1" fill="rgba(143,143,143,0.30)"/><line x1="66" y1="78.5" x2="1669" y2="78.5" stroke="rgba(143,143,143,0.30)" stroke-dasharray="1 1"/><rect x="65" y="78" width="2" height="1" fill="rgba(143,143,143,0.30)"/><rect x="1667" y="78" width="2" height="1" fill="rgba(143,143,143,0.30)"/><line x1="66" y1="71.5" x2="1669" y2="71.5" stroke="rgba(143,143,143,0.30)" stroke-dasharray="1 1"/><rect x="65" y="71" width="2" height="1" fill="rgba(143,143,143,0.30)"/><rect x="1667" y="71" width="2" height="1" fill="rgba(143,143,143,0.30)"/><line x1="65" y1="65.5" x2="1670" y2="65.5" stroke="rgba(222,79,79,0.36)" stroke-dasharray="1 1"/><rect x="65" y="65" width="2" height="1" fill="rgba(222,79,79,0.36)"/><rect x="1667" y="65" width="2" height="1" fill="rgba(222,79,79,0.36)"/><line x1="66" y1="59.5" x2="1669" y2="59.5" stroke="rgba(143,143,143,0.30)" stroke-dasharray="1 1"/><rect x="65" y="59" width="2" height="1" fill="rgba(143,143,143,0.30)"/><rect x="1667" y="59" width="2" height="1" fill="rgba(143,143,143,0.30)"/><line x1="66" y1="53.5" x2="1669" y2="53.5" stroke="rgba(143,143,143,0.30)" stroke-dasharray="1 1"/><rect x="65" y="53" width="2" height="1" fill="rgba(143,143,143,0.30)"/><rect x="1667" y="53" width="2" height="1" fill="rgba(143,143,143,0.30)"/><line x1="66" y1="46.5" x2="1669" y2="46.5" stroke="rgba(143,143,143,0.30)" stroke-dasharray="1 1"/><rect x="65" y="46" width="2" height="1" fill="rgba(143,143,143,0.30)"/><rect x="1667" y="46" width="2" height="1" fill="rgba(143,143,143,0.30)"/><line x1="66" y1="40.5" x2="1669" y2="40.5" stroke="rgba(143,143,143,0.30)" stroke-dasharray="1 1"/><rect x="65" y="40" width="2" height="1" fill="rgba(143,143,143,0.30)"/><rect x="1667" y="40" width="2" height="1" fill="rgba(143,143,143,0.30)"/><line x1="65" y1="34.5" x2="1670" y2="34.5" stroke="rgba(222,79,79,0.36)" stroke-dasharray="1 1"/><rect x="65" y="34" width="2" height="1" fill="rgba(222,79,79,0.36)"/><rect x="1667" y="34" width="2" height="1" fill="rgba(222,79,79,0.36)"/><line x1="66" y1="28.5" x2="1669" y2="28.5" stroke="rgba(143,143,143,0.30)" stroke-dasharray="1 1"/><rect x="65" y="28" width="2" height="1" fill="rgba(143,143,143,0.30)"/><rect x="1667" y="28" width="2" height="1" fill="rgba(143,143,143,0.30)"/><line x1="78.5" y1="28" x2="78.5" y2="630" stroke="rgba(143,143,143,0.30)" stroke-dasharray="1 1"/><rect x="78" y="26" width="1" height="2" fill="rgba(143,143,143,0.30)"/><rect x="78" y="628" width="1" height="3" fill="rgba(143,143,143,0.30)"/><line x1="91.5" y1="28" x2="91.5" y2="630" stroke="rgba(143,143,143,0.30)" stroke-dasharray="1 1"/><rect x="91" y="26" width="1" height="2" fill="rgba(143,143,143,0.30)"/><rect x="91" y="628" width="1" height="3" fill="rgba(143,143,143,0.30)"/><line x1="105.5" y1="28" x2="105.5" y2="630" stroke="rgba(222,79,79,0.36)" stroke-dasharray="1 1"/><rect x="105" y="26" width="1" height="2" fill="rgba(222,79,79,0.36)"/><rect x="105" y="628" width="1" height="4" fill="rgba(222,79,79,0.36)"/><line x1="118.5" y1="28" x2="118.5" y2="630" stroke="rgba(143,143,143,0.30)" stroke-dasharray="1 1"/><rect x="118" y="26" width="1" height="2" fill="rgba(143,143,143,0.30)"/><rect x="118" y="628" width="1" height="3" fill="rgba(143,143,143,0.30)"/><line x1="131.5" y1="28" x2="131.5" y2="630" stroke="rgba(143,143,143,0.30)" stroke-dasharray="1 1"/><rect x="131" y="26" width="1" height="2" fill="rgba(143,143,143,0.30)"/><rect x="131" y="628" width="1" height="3" fill="rgba(143,143,143,0.30)"/><line x1="145.5" y1="28" x2="145.5" y2="630" stroke="rgba(143,143,143,0.30)" stroke-dasharray="1 1"/><rect x="145" y="26" width="1" height="2" fill="rgba(143,143,143,0.30)"/><rect x="145" y="628" width="1" height="3" fill="rgba(143,143,143,0.30)"/><line x1="158.5" y1="28" x2="158.5" y2="630" stroke="rgba(222,79,79,0.36)" stroke-dasharray="1 1"/><rect x="158" y="26" width="1" height="2" fill="rgba(222,79,79,0.36)"/><rect x="158" y="628" width="1" height="4" fill="rgba(222,79,79,0.36)"/><line x1="171.5" y1="28" x2="171.5" y2="630" stroke="rgba(143,143,143,0.30)" stroke-dasharray="1 1"/><rect x="171" y="26" width="1" height="2" fill="rgba(143,143,143,0.30)"/><rect x="171" y="628" width="1" height="3" fill="rgba(143,143,143,0.30)"/><line x1="185.5" y1="28" x2="185.5" y2="630" stroke="rgba(143,143,143,0.30)" stroke-dasharray="1 1"/><rect x="185" y="26" width="1" height="2" fill="rgba(143,143,143,0.30)"/><rect x="185" y="628" width="1" height="3" fill="rgba(143,143,143,0.30)"/><line x1="198.5" y1="28" x2="198.5" y2="630" stroke="rgba(143,143,143,0.30)" stroke-dasharray="1 1"/><rect x="198" y="26" width="1" height="2" fill="rgba(143,143,143,0.30)"/><rect x="198" y="628" width="1" height="3" fill="rgba(143,143,143,0.30)"/><line x1="211.5" y1="28" x2="211.5" y2="630" stroke="rgba(222,79,79,0.36)" stroke-dasharray="1 1"/><rect x="211" y="26" width="1" height="2" fill="rgba(222,79,79,0.36)"/><rect x="211" y="628" width="1" height="4" fill="rgba(222,79,79,0.36)"/><line x1="225.5" y1="28" x2="225.5" y2="630" stroke="rgba(143,143,143,0.30)" stroke-dasharray="1 1"/><rect x="225" y="26" width="1" height="2" fill="rgba(143,143,143,0.30)"/><rect x="225" y="628" width="1" height="3" fill="rgba(143,143,143,0.30)"/><line x1="238.5" y1="28" x2="238.5" y2="630" stroke="rgba(143,143,143,0.30)" stroke-dasharray="1 1"/><rect x="238" y="26" width="1" height="2" fill="rgba(143,143,143,0.30)"/><rect x="238" y="628" width="1" height="3" fill="rgba(143,143,143,0.30)"/><line x1="251.5" y1="28" x2="251.5" y2="630" stroke="rgba(143,143,143,0.30)" stroke-dasharray="1 1"/><rect x="251" y="26" width="1" height="2" fill="rgba(143,143,143,0.30)"/><rect x="251" y="628" width="1" height="3" fill="rgba(143,143,143,0.30)"/><line x1="265.5" y1="28" x2="265.5" y2="630" stroke="rgba(222,79,79,0.36)" stroke-dasharray="1 1"/><rect x="265" y="26" width="1" height="2" fill="rgba(222,79,79,0.36)"/><rect x="265" y="628" width="1" height="4" fill="rgba(222,79,79,0.36)"/><line x1="278.5" y1="28" x2="278.5" y2="630" stroke="rgba(143,143,143,0.30)" stroke-dasharray="1 1"/><rect x="278" y="26" width="1" height="2" fill="rgba(143,143,143,0.30)"/><rect x="278" y="628" width="1" height="3" fill="rgba(143,143,143,0.30)"/><line x1="291.5" y1="28" x2="291.5" y2="630" stroke="rgba(143,143,143,0.30)" stroke-dasharray="1 1"/><rect x="291" y="26" width="1" height="2" fill="rgba(143,143,143,0.30)"/><rect x="291" y="628" width="1" height="3" fill="rgba(143,143,143,0.30)"/><line x1="305.5" y1="28" x2="305.5" y2="630" stroke="rgba(143,143,143,0.30)" stroke-dasharray="1 1"/><rect x="305" y="26" width="1" height="2" fill="rgba(143,143,143,0.30)"/><rect x="305" y="628" width="1" height="3" fill="rgba(143,143,143,0.30)"/><line x1="318.5" y1="28" x2="318.5" y2="630" stroke="rgba(222,79,79,0.36)" stroke-dasharray="1 1"/><rect x="318" y="26" width="1" height="2" fill="rgba(222,79,79,0.36)"/><rect x="318" y="628" width="1" height="4" fill="rgba(222,79,79,0.36)"/><line x1="331.5" y1="28" x2="331.5" y2="630" stroke="rgba(143,143,143,0.30)" stroke-dasharray="1 1"/><rect x="331" y="26" width="1" height="2" fill="rgba(143,143,143,0.30)"/><rect x="331" y="628" width="1" height="3" fill="rgba(143,143,143,0.30)"/><line x1="345.5" y1="28" x2="345.5" y2="630" stroke="rgba(143,143,143,0.30)" stroke-dasharray="1 1"/><rect x="345" y="26" width="1" height="2" fill="rgba(143,143,143,0.30)"/><rect x="345" y="628" width="1" height="3" fill="rgba(143,143,143,0.30)"/><line x1="358.5" y1="28" x2="358.5" y2="630" stroke="rgba(143,143,143,0.30)" stroke-dasharray="1 1"/><rect x="358" y="26" width="1" height="2" fill="rgba(143,143,143,0.30)"/><rect x="358" y="628" width="1" height="3" fill="rgba(143,143,143,0.30)"/><line x1="371.5" y1="28" x2="371.5" y2="630" stroke="rgba(222,79,79,0.36)" stroke-dasharray="1 1"/><rect x="371" y="26" width="1" height="2" fill="rgba(222,79,79,0.36)"/><rect x="371" y="628" width="1" height="4" fill="rgba(222,79,79,0.36)"/><line x1="385.5" y1="28" x2="385.5" y2="630" stroke="rgba(143,143,143,0.30)" stroke-dasharray="1 1"/><rect x="385" y="26" width="1" height="2" fill="rgba(143,143,143,0.30)"/><rect x="385" y="628" width="1" height="3" fill="rgba(143,143,143,0.30)"/><line x1="398.5" y1="28" x2="398.5" y2="630" stroke="rgba(143,143,143,0.30)" stroke-dasharray="1 1"/><rect x="398" y="26" width="1" height="2" fill="rgba(143,143,143,0.30)"/><rect x="398" y="628" width="1" height="3" fill="rgba(143,143,143,0.30)"/><line x1="411.5" y1="28" x2="411.5" y2="630" stroke="rgba(143,143,143,0.30)" stroke-dasharray="1 1"/><rect x="411" y="26" width="1" height="2" fill="rgba(143,143,143,0.30)"/><rect x="411" y="628" width="1" height="3" fill="rgba(143,143,143,0.30)"/><line x1="425.5" y1="28" x2="425.5" y2="630" stroke="rgba(222,79,79,0.36)" stroke-dasharray="1 1"/><rect x="425" y="26" width="1" height="2" fill="rgba(222,79,79,0.36)"/><rect x="425" y="628" width="1" height="4" fill="rgba(222,79,79,0.36)"/><line x1="438.5" y1="28" x2="438.5" y2="630" stroke="rgba(143,143,143,0.30)" stroke-dasharray="1 1"/><rect x="438" y="26" width="1" height="2" fill="rgba(143,143,143,0.30)"/><rect x="438" y="628" width="1" height="3" fill="rgba(143,143,143,0.30)"/><line x1="451.5" y1="28" x2="451.5" y2="630" stroke="rgba(143,143,143,0.30)" stroke-dasharray="1 1"/><rect x="451" y="26" width="1" height="2" fill="rgba(143,143,143,0.30)"/><rect x="451" y="628" width="1" height="3" fill="rgba(143,143,143,0.30)"/><line x1="465.5" y1="28" x2="465.5" y2="630" stroke="rgba(143,143,143,0.30)" stroke-dasharray="1 1"/><rect x="465" y="26" width="1" height="2" fill="rgba(143,143,143,0.30)"/><rect x="465" y="628" width="1" height="3" fill="rgba(143,143,143,0.30)"/><line x1="478.5" y1="28" x2="478.5" y2="630" stroke="rgba(222,79,79,0.36)" stroke-dasharray="1 1"/><rect x="478" y="26" width="1" height="2" fill="rgba(222,79,79,0.36)"/><rect x="478" y="628" width="1" height="4" fill="rgba(222,79,79,0.36)"/><line x1="491.5" y1="28" x2="491.5" y2="630" stroke="rgba(143,143,143,0.30)" stroke-dasharray="1 1"/><rect x="491" y="26" width="1" height="2" fill="rgba(143,143,143,0.30)"/><rect x="491" y="628" width="1" height="3" fill="rgba(143,143,143,0.30)"/><line x1="505.5" y1="28" x2="505.5" y2="630" stroke="rgba(143,143,143,0.30)" stroke-dasharray="1 1"/><rect x="505" y="26" width="1" height="2" fill="rgba(143,143,143,0.30)"/><rect x="505" y="628" width="1" height="3" fill="rgba(143,143,143,0.30)"/><line x1="518.5" y1="28" x2="518.5" y2="630" stroke="rgba(143,143,143,0.30)" stroke-dasharray="1 1"/><rect x="518" y="26" width="1" height="2" fill="rgba(143,143,143,0.30)"/><rect x="518" y="628" width="1" height="3" fill="rgba(143,143,143,0.30)"/><line x1="531.5" y1="28" x2="531.5" y2="630" stroke="rgba(222,79,79,0.36)" stroke-dasharray="1 1"/><rect x="531" y="26" width="1" height="2" fill="rgba(222,79,79,0.36)"/><rect x="531" y="628" width="1" height="4" fill="rgba(222,79,79,0.36)"/><line x1="545.5" y1="28" x2="545.5" y2="630" stroke="rgba(143,143,143,0.30)" stroke-dasharray="1 1"/><rect x="545" y="26" width="1" height="2" fill="rgba(143,143,143,0.30)"/><rect x="545" y="628" width="1" height="3" fill="rgba(143,143,143,0.30)"/><line x1="558.5" y1="28" x2="558.5" y2="630" stroke="rgba(143,143,143,0.30)" stroke-dasharray="1 1"/><rect x="558" y="26" width="1" height="2" fill="rgba(143,143,143,0.30)"/><rect x="558" y="628" width="1" height="3" fill="rgba(143,143,143,0.30)"/><line x1="571.5" y1="28" x2="571.5" y2="630" stroke="rgba(143,143,143,0.30)" stroke-dasharray="1 1"/><rect x="571" y="26" width="1" height="2" fill="rgba(143,143,143,0.30)"/><rect x="571" y="628" width="1" height="3" fill="rgba(143,143,143,0.30)"/><line x1="585.5" y1="28" x2="585.5" y2="630" stroke="rgba(222,79,79,0.36)" stroke-dasharray="1 1"/><rect x="585" y="26" width="1" height="2" fill="rgba(222,79,79,0.36)"/><rect x="585" y="628" width="1" height="4" fill="rgba(222,79,79,0.36)"/><line x1="598.5" y1="28" x2="598.5" y2="630" stroke="rgba(143,143,143,0.30)" stroke-dasharray="1 1"/><rect x="598" y="26" width="1" height="2" fill="rgba(143,143,143,0.30)"/><rect x="598" y="628" width="1" height="3" fill="rgba(143,143,143,0.30)"/><line x1="611.5" y1="28" x2="611.5" y2="630" stroke="rgba(143,143,143,0.30)" stroke-dasharray="1 1"/><rect x="611" y="26" width="1" height="2" fill="rgba(143,143,143,0.30)"/><rect x="611" y="628" width="1" height="3" fill="rgba(143,143,143,0.30)"/><line x1="625.5" y1="28" x2="625.5" y2="630" stroke="rgba(143,143,143,0.30)" stroke-dasharray="1 1"/><rect x="625" y="26" width="1" height="2" fill="rgba(143,143,143,0.30)"/><rect x="625" y="628" width="1" height="3" fill="rgba(143,143,143,0.30)"/><line x1="638.5" y1="28" x2="638.5" y2="630" stroke="rgba(222,79,79,0.36)" stroke-dasharray="1 1"/><rect x="638" y="26" width="1" height="2" fill="rgba(222,79,79,0.36)"/><rect x="638" y="628" width="1" height="4" fill="rgba(222,79,79,0.36)"/><line x1="651.5" y1="28" x2="651.5" y2="630" stroke="rgba(143,143,143,0.30)" stroke-dasharray="1 1"/><rect x="651" y="26" width="1" height="2" fill="rgba(143,143,143,0.30)"/><rect x="651" y="628" width="1" height="3" fill="rgba(143,143,143,0.30)"/><line x1="665.5" y1="28" x2="665.5" y2="630" stroke="rgba(143,143,143,0.30)" stroke-dasharray="1 1"/><rect x="665" y="26" width="1" height="2" fill="rgba(143,143,143,0.30)"/><rect x="665" y="628" width="1" height="3" fill="rgba(143,143,143,0.30)"/><line x1="678.5" y1="28" x2="678.5" y2="630" stroke="rgba(143,143,143,0.30)" stroke-dasharray="1 1"/><rect x="678" y="26" width="1" height="2" fill="rgba(143,143,143,0.30)"/><rect x="678" y="628" width="1" height="3" fill="rgba(143,143,143,0.30)"/><line x1="691.5" y1="28" x2="691.5" y2="630" stroke="rgba(222,79,79,0.36)" stroke-dasharray="1 1"/><rect x="691" y="26" width="1" height="2" fill="rgba(222,79,79,0.36)"/><rect x="691" y="628" width="1" height="4" fill="rgba(222,79,79,0.36)"/><line x1="705.5" y1="28" x2="705.5" y2="630" stroke="rgba(143,143,143,0.30)" stroke-dasharray="1 1"/><rect x="705" y="26" width="1" height="2" fill="rgba(143,143,143,0.30)"/><rect x="705" y="628" width="1" height="3" fill="rgba(143,143,143,0.30)"/><line x1="718.5" y1="28" x2="718.5" y2="630" stroke="rgba(143,143,143,0.30)" stroke-dasharray="1 1"/><rect x="718" y="26" width="1" height="2" fill="rgba(143,143,143,0.30)"/><rect x="718" y="628" width="1" height="3" fill="rgba(143,143,143,0.30)"/><line x1="731.5" y1="28" x2="731.5" y2="630" stroke="rgba(143,143,143,0.30)" stroke-dasharray="1 1"/><rect x="731" y="26" width="1" height="2" fill="rgba(143,143,143,0.30)"/><rect x="731" y="628" width="1" height="3" fill="rgba(143,143,143,0.30)"/><line x1="745.5" y1="28" x2="745.5" y2="630" stroke="rgba(222,79,79,0.36)" stroke-dasharray="1 1"/><rect x="745" y="26" width="1" height="2" fill="rgba(222,79,79,0.36)"/><rect x="745" y="628" width="1" height="4" fill="rgba(222,79,79,0.36)"/><line x1="758.5" y1="28" x2="758.5" y2="630" stroke="rgba(143,143,143,0.30)" stroke-dasharray="1 1"/><rect x="758" y="26" width="1" height="2" fill="rgba(143,143,143,0.30)"/><rect x="758" y="628" width="1" height="3" fill="rgba(143,143,143,0.30)"/><line x1="771.5" y1="28" x2="771.5" y2="630" stroke="rgba(143,143,143,0.30)" stroke-dasharray="1 1"/><rect x="771" y="26" width="1" height="2" fill="rgba(143,143,143,0.30)"/><rect x="771" y="628" width="1" height="3" fill="rgba(143,143,143,0.30)"/><line x1="785.5" y1="28" x2="785.5" y2="630" stroke="rgba(143,143,143,0.30)" stroke-dasharray="1 1"/><rect x="785" y="26" width="1" height="2" fill="rgba(143,143,143,0.30)"/><rect x="785" y="628" width="1" height="3" fill="rgba(143,143,143,0.30)"/><line x1="798.5" y1="28" x2="798.5" y2="630" stroke="rgba(222,79,79,0.36)" stroke-dasharray="1 1"/><rect x="798" y="26" width="1" height="2" fill="rgba(222,79,79,0.36)"/><rect x="798" y="628" width="1" height="4" fill="rgba(222,79,79,0.36)"/><line x1="811.5" y1="28" x2="811.5" y2="630" stroke="rgba(143,143,143,0.30)" stroke-dasharray="1 1"/><rect x="811" y="26" width="1" height="2" fill="rgba(143,143,143,0.30)"/><rect x="811" y="628" width="1" height="3" fill="rgba(143,143,143,0.30)"/><line x1="825.5" y1="28" x2="825.5" y2="630" stroke="rgba(143,143,143,0.30)" stroke-dasharray="1 1"/><rect x="825" y="26" width="1" height="2" fill="rgba(143,143,143,0.30)"/><rect x="825" y="628" width="1" height="3" fill="rgba(143,143,143,0.30)"/><line x1="838.5" y1="28" x2="838.5" y2="630" stroke="rgba(143,143,143,0.30)" stroke-dasharray="1 1"/><rect x="838" y="26" width="1" height="2" fill="rgba(143,143,143,0.30)"/><rect x="838" y="628" width="1" height="3" fill="rgba(143,143,143,0.30)"/><line x1="851.5" y1="28" x2="851.5" y2="630" stroke="rgba(222,79,79,0.36)" stroke-dasharray="1 1"/><rect x="851" y="26" width="1" height="2" fill="rgba(222,79,79,0.36)"/><rect x="851" y="628" width="1" height="4" fill="rgba(222,79,79,0.36)"/><line x1="865.5" y1="28" x2="865.5" y2="630" stroke="rgba(143,143,143,0.30)" stroke-dasharray="1 1"/><rect x="865" y="26" width="1" height="2" fill="rgba(143,143,143,0.30)"/><rect x="865" y="628" width="1" height="3" fill="rgba(143,143,143,0.30)"/><line x1="878.5" y1="28" x2="878.5" y2="630" stroke="rgba(143,143,143,0.30)" stroke-dasharray="1 1"/><rect x="878" y="26" width="1" height="2" fill="rgba(143,143,143,0.30)"/><rect x="878" y="628" width="1" height="3" fill="rgba(143,143,143,0.30)"/><line x1="891.5" y1="28" x2="891.5" y2="630" stroke="rgba(143,143,143,0.30)" stroke-dasharray="1 1"/><rect x="891" y="26" width="1" height="2" fill="rgba(143,143,143,0.30)"/><rect x="891" y="628" width="1" height="3" fill="rgba(143,143,143,0.30)"/><line x1="905.5" y1="28" x2="905.5" y2="630" stroke="rgba(222,79,79,0.36)" stroke-dasharray="1 1"/><rect x="905" y="26" width="1" height="2" fill="rgba(222,79,79,0.36)"/><rect x="905" y="628" width="1" height="4" fill="rgba(222,79,79,0.36)"/><line x1="918.5" y1="28" x2="918.5" y2="630" stroke="rgba(143,143,143,0.30)" stroke-dasharray="1 1"/><rect x="918" y="26" width="1" height="2" fill="rgba(143,143,143,0.30)"/><rect x="918" y="628" width="1" height="3" fill="rgba(143,143,143,0.30)"/><line x1="931.5" y1="28" x2="931.5" y2="630" stroke="rgba(143,143,143,0.30)" stroke-dasharray="1 1"/><rect x="931" y="26" width="1" height="2" fill="rgba(143,143,143,0.30)"/><rect x="931" y="628" width="1" height="3" fill="rgba(143,143,143,0.30)"/><line x1="945.5" y1="28" x2="945.5" y2="630" stroke="rgba(143,143,143,0.30)" stroke-dasharray="1 1"/><rect x="945" y="26" width="1" height="2" fill="rgba(143,143,143,0.30)"/><rect x="945" y="628" width="1" height="3" fill="rgba(143,143,143,0.30)"/><line x1="958.5" y1="28" x2="958.5" y2="630" stroke="rgba(222,79,79,0.36)" stroke-dasharray="1 1"/><rect x="958" y="26" width="1" height="2" fill="rgba(222,79,79,0.36)"/><rect x="958" y="628" width="1" height="4" fill="rgba(222,79,79,0.36)"/><line x1="971.5" y1="28" x2="971.5" y2="630" stroke="rgba(143,143,143,0.30)" stroke-dasharray="1 1"/><rect x="971" y="26" width="1" height="2" fill="rgba(143,143,143,0.30)"/><rect x="971" y="628" width="1" height="3" fill="rgba(143,143,143,0.30)"/><line x1="985.5" y1="28" x2="985.5" y2="630" stroke="rgba(143,143,143,0.30)" stroke-dasharray="1 1"/><rect x="985" y="26" width="1" height="2" fill="rgba(143,143,143,0.30)"/><rect x="985" y="628" width="1" height="3" fill="rgba(143,143,143,0.30)"/><line x1="998.5" y1="28" x2="998.5" y2="630" stroke="rgba(143,143,143,0.30)" stroke-dasharray="1 1"/><rect x="998" y="26" width="1" height="2" fill="rgba(143,143,143,0.30)"/><rect x="998" y="628" width="1" height="3" fill="rgba(143,143,143,0.30)"/><line x1="1011.5" y1="28" x2="1011.5" y2="630" stroke="rgba(222,79,79,0.36)" stroke-dasharray="1 1"/><rect x="1011" y="26" width="1" height="2" fill="rgba(222,79,79,0.36)"/><rect x="1011" y="628" width="1" height="4" fill="rgba(222,79,79,0.36)"/><line x1="1025.5" y1="28" x2="1025.5" y2="630" stroke="rgba(143,143,143,0.30)" stroke-dasharray="1 1"/><rect x="1025" y="26" width="1" height="2" fill="rgba(143,143,143,0.30)"/><rect x="1025" y="628" width="1" height="3" fill="rgba(143,143,143,0.30)"/><line x1="1038.5" y1="28" x2="1038.5" y2="630" stroke="rgba(143,143,143,0.30)" stroke-dasharray="1 1"/><rect x="1038" y="26" width="1" height="2" fill="rgba(143,143,143,0.30)"/><rect x="1038" y="628" width="1" height="3" fill="rgba(143,143,143,0.30)"/><line x1="1051.5" y1="28" x2="1051.5" y2="630" stroke="rgba(143,143,143,0.30)" stroke-dasharray="1 1"/><rect x="1051" y="26" width="1" height="2" fill="rgba(143,143,143,0.30)"/><rect x="1051" y="628" width="1" height="3" fill="rgba(143,143,143,0.30)"/><line x1="1065.5" y1="28" x2="1065.5" y2="630" stroke="rgba(222,79,79,0.36)" stroke-dasharray="1 1"/><rect x="1065" y="26" width="1" height="2" fill="rgba(222,79,79,0.36)"/><rect x="1065" y="628" width="1" height="4" fill="rgba(222,79,79,0.36)"/><line x1="1078.5" y1="28" x2="1078.5" y2="630" stroke="rgba(143,143,143,0.30)" stroke-dasharray="1 1"/><rect x="1078" y="26" width="1" height="2" fill="rgba(143,143,143,0.30)"/><rect x="1078" y="628" width="1" height="3" fill="rgba(143,143,143,0.30)"/><line x1="1091.5" y1="28" x2="1091.5" y2="630" stroke="rgba(143,143,143,0.30)" stroke-dasharray="1 1"/><rect x="1091" y="26" width="1" height="2" fill="rgba(143,143,143,0.30)"/><rect x="1091" y="628" width="1" height="3" fill="rgba(143,143,143,0.30)"/><line x1="1105.5" y1="28" x2="1105.5" y2="630" stroke="rgba(143,143,143,0.30)" stroke-dasharray="1 1"/><rect x="1105" y="26" width="1" height="2" fill="rgba(143,143,143,0.30)"/><rect x="1105" y="628" width="1" height="3" fill="rgba(143,143,143,0.30)"/><line x1="1118.5" y1="28" x2="1118.5" y2="630" stroke="rgba(222,79,79,0.36)" stroke-dasharray="1 1"/><rect x="1118" y="26" width="1" height="2" fill="rgba(222,79,79,0.36)"/><rect x="1118" y="628" width="1" height="4" fill="rgba(222,79,79,0.36)"/><line x1="1131.5" y1="28" x2="1131.5" y2="630" stroke="rgba(143,143,143,0.30)" stroke-dasharray="1 1"/><rect x="1131" y="26" width="1" height="2" fill="rgba(143,143,143,0.30)"/><rect x="1131" y="628" width="1" height="3" fill="rgba(143,143,143,0.30)"/><line x1="1145.5" y1="28" x2="1145.5" y2="630" stroke="rgba(143,143,143,0.30)" stroke-dasharray="1 1"/><rect x="1145" y="26" width="1" height="2" fill="rgba(143,143,143,0.30)"/><rect x="1145" y="628" width="1" height="3" fill="rgba(143,143,143,0.30)"/><line x1="1158.5" y1="28" x2="1158.5" y2="630" stroke="rgba(143,143,143,0.30)" stroke-dasharray="1 1"/><rect x="1158" y="26" width="1" height="2" fill="rgba(143,143,143,0.30)"/><rect x="1158" y="628" width="1" height="3" fill="rgba(143,143,143,0.30)"/><line x1="1171.5" y1="28" x2="1171.5" y2="630" stroke="rgba(222,79,79,0.36)" stroke-dasharray="1 1"/><rect x="1171" y="26" width="1" height="2" fill="rgba(222,79,79,0.36)"/><rect x="1171" y="628" width="1" height="4" fill="rgba(222,79,79,0.36)"/><line x1="1185.5" y1="28" x2="1185.5" y2="630" stroke="rgba(143,143,143,0.30)" stroke-dasharray="1 1"/><rect x="1185" y="26" width="1" height="2" fill="rgba(143,143,143,0.30)"/><rect x="1185" y="628" width="1" height="3" fill="rgba(143,143,143,0.30)"/><line x1="1198.5" y1="28" x2="1198.5" y2="630" stroke="rgba(143,143,143,0.30)" stroke-dasharray="1 1"/><rect x="1198" y="26" width="1" height="2" fill="rgba(143,143,143,0.30)"/><rect x="1198" y="628" width="1" height="3" fill="rgba(143,143,143,0.30)"/><line x1="1211.5" y1="28" x2="1211.5" y2="630" stroke="rgba(143,143,143,0.30)" stroke-dasharray="1 1"/><rect x="1211" y="26" width="1" height="2" fill="rgba(143,143,143,0.30)"/><rect x="1211" y="628" width="1" height="3" fill="rgba(143,143,143,0.30)"/><line x1="1225.5" y1="28" x2="1225.5" y2="630" stroke="rgba(222,79,79,0.36)" stroke-dasharray="1 1"/><rect x="1225" y="26" width="1" height="2" fill="rgba(222,79,79,0.36)"/><rect x="1225" y="628" width="1" height="4" fill="rgba(222,79,79,0.36)"/><line x1="1238.5" y1="28" x2="1238.5" y2="630" stroke="rgba(143,143,143,0.30)" stroke-dasharray="1 1"/><rect x="1238" y="26" width="1" height="2" fill="rgba(143,143,143,0.30)"/><rect x="1238" y="628" width="1" height="3" fill="rgba(143,143,143,0.30)"/><line x1="1251.5" y1="28" x2="1251.5" y2="630" stroke="rgba(143,143,143,0.30)" stroke-dasharray="1 1"/><rect x="1251" y="26" width="1" height="2" fill="rgba(143,143,143,0.30)"/><rect x="1251" y="628" width="1" height="3" fill="rgba(143,143,143,0.30)"/><line x1="1265.5" y1="28" x2="1265.5" y2="630" stroke="rgba(143,143,143,0.30)" stroke-dasharray="1 1"/><rect x="1265" y="26" width="1" height="2" fill="rgba(143,143,143,0.30)"/><rect x="1265" y="628" width="1" height="3" fill="rgba(143,143,143,0.30)"/><line x1="1278.5" y1="28" x2="1278.5" y2="630" stroke="rgba(222,79,79,0.36)" stroke-dasharray="1 1"/><rect x="1278" y="26" width="1" height="2" fill="rgba(222,79,79,0.36)"/><rect x="1278" y="628" width="1" height="4" fill="rgba(222,79,79,0.36)"/><line x1="1291.5" y1="28" x2="1291.5" y2="630" stroke="rgba(143,143,143,0.30)" stroke-dasharray="1 1"/><rect x="1291" y="26" width="1" height="2" fill="rgba(143,143,143,0.30)"/><rect x="1291" y="628" width="1" height="3" fill="rgba(143,143,143,0.30)"/><line x1="1305.5" y1="28" x2="1305.5" y2="630" stroke="rgba(143,143,143,0.30)" stroke-dasharray="1 1"/><rect x="1305" y="26" width="1" height="2" fill="rgba(143,143,143,0.30)"/><rect x="1305" y="628" width="1" height="3" fill="rgba(143,143,143,0.30)"/><line x1="1318.5" y1="28" x2="1318.5" y2="630" stroke="rgba(143,143,143,0.30)" stroke-dasharray="1 1"/><rect x="1318" y="26" width="1" height="2" fill="rgba(143,143,143,0.30)"/><rect x="1318" y="628" width="1" height="3" fill="rgba(143,143,143,0.30)"/><line x1="1331.5" y1="28" x2="1331.5" y2="630" stroke="rgba(222,79,79,0.36)" stroke-dasharray="1 1"/><rect x="1331" y="26" width="1" height="2" fill="rgba(222,79,79,0.36)"/><rect x="1331" y="628" width="1" height="4" fill="rgba(222,79,79,0.36)"/><line x1="1345.5" y1="28" x2="1345.5" y2="630" stroke="rgba(143,143,143,0.30)" stroke-dasharray="1 1"/><rect x="1345" y="26" width="1" height="2" fill="rgba(143,143,143,0.30)"/><rect x="1345" y="628" width="1" height="3" fill="rgba(143,143,143,0.30)"/><line x1="1358.5" y1="28" x2="1358.5" y2="630" stroke="rgba(143,143,143,0.30)" stroke-dasharray="1 1"/><rect x="1358" y="26" width="1" height="2" fill="rgba(143,143,143,0.30)"/><rect x="1358" y="628" width="1" height="3" fill="rgba(143,143,143,0.30)"/><line x1="1371.5" y1="28" x2="1371.5" y2="630" stroke="rgba(143,143,143,0.30)" stroke-dasharray="1 1"/><rect x="1371" y="26" width="1" height="2" fill="rgba(143,143,143,0.30)"/><rect x="1371" y="628" width="1" height="3" fill="rgba(143,143,143,0.30)"/><line x1="1385.5" y1="28" x2="1385.5" y2="630" stroke="rgba(222,79,79,0.36)" stroke-dasharray="1 1"/><rect x="1385" y="26" width="1" height="2" fill="rgba(222,79,79,0.36)"/><rect x="1385" y="628" width="1" height="4" fill="rgba(222,79,79,0.36)"/><line x1="1398.5" y1="28" x2="1398.5" y2="630" stroke="rgba(143,143,143,0.30)" stroke-dasharray="1 1"/><rect x="1398" y="26" width="1" height="2" fill="rgba(143,143,143,0.30)"/><rect x="1398" y="628" width="1" height="3" fill="rgba(143,143,143,0.30)"/><line x1="1411.5" y1="28" x2="1411.5" y2="630" stroke="rgba(143,143,143,0.30)" stroke-dasharray="1 1"/><rect x="1411" y="26" width="1" height="2" fill="rgba(143,143,143,0.30)"/><rect x="1411" y="628" width="1" height="3" fill="rgba(143,143,143,0.30)"/><line x1="1425.5" y1="28" x2="1425.5" y2="630" stroke="rgba(143,143,143,0.30)" stroke-dasharray="1 1"/><rect x="1425" y="26" width="1" height="2" fill="rgba(143,143,143,0.30)"/><rect x="1425" y="628" width="1" height="3" fill="rgba(143,143,143,0.30)"/><line x1="1438.5" y1="28" x2="1438.5" y2="630" stroke="rgba(222,79,79,0.36)" stroke-dasharray="1 1"/><rect x="1438" y="26" width="1" height="2" fill="rgba(222,79,79,0.36)"/><rect x="1438" y="628" width="1" height="4" fill="rgba(222,79,79,0.36)"/><line x1="1451.5" y1="28" x2="1451.5" y2="630" stroke="rgba(143,143,143,0.30)" stroke-dasharray="1 1"/><rect x="1451" y="26" width="1" height="2" fill="rgba(143,143,143,0.30)"/><rect x="1451" y="628" width="1" height="3" fill="rgba(143,143,143,0.30)"/><line x1="1465.5" y1="28" x2="1465.5" y2="630" stroke="rgba(143,143,143,0.30)" stroke-dasharray="1 1"/><rect x="1465" y="26" width="1" height="2" fill="rgba(143,143,143,0.30)"/><rect x="1465" y="628" width="1" height="3" fill="rgba(143,143,143,0.30)"/><line x1="1478.5" y1="28" x2="1478.5" y2="630" stroke="rgba(143,143,143,0.30)" stroke-dasharray="1 1"/><rect x="1478" y="26" width="1" height="2" fill="rgba(143,143,143,0.30)"/><rect x="1478" y="628" width="1" height="3" fill="rgba(143,143,143,0.30)"/><line x1="1491.5" y1="28" x2="1491.5" y2="630" stroke="rgba(222,79,79,0.36)" stroke-dasharray="1 1"/><rect x="1491" y="26" width="1" height="2" fill="rgba(222,79,79,0.36)"/><rect x="1491" y="628" width="1" height="4" fill="rgba(222,79,79,0.36)"/><line x1="1505.5" y1="28" x2="1505.5" y2="630" stroke="rgba(143,143,143,0.30)" stroke-dasharray="1 1"/><rect x="1505" y="26" width="1" height="2" fill="rgba(143,143,143,0.30)"/><rect x="1505" y="628" width="1" height="3" fill="rgba(143,143,143,0.30)"/><line x1="1518.5" y1="28" x2="1518.5" y2="630" stroke="rgba(143,143,143,0.30)" stroke-dasharray="1 1"/><rect x="1518" y="26" width="1" height="2" fill="rgba(143,143,143,0.30)"/><rect x="1518" y="628" width="1" height="3" fill="rgba(143,143,143,0.30)"/><line x1="1531.5" y1="28" x2="1531.5" y2="630" stroke="rgba(143,143,143,0.30)" stroke-dasharray="1 1"/><rect x="1531" y="26" width="1" height="2" fill="rgba(143,143,143,0.30)"/><rect x="1531" y="628" width="1" height="3" fill="rgba(143,143,143,0.30)"/><line x1="1545.5" y1="28" x2="1545.5" y2="630" stroke="rgba(222,79,79,0.36)" stroke-dasharray="1 1"/><rect x="1545" y="26" width="1" height="2" fill="rgba(222,79,79,0.36)"/><rect x="1545" y="628" width="1" height="4" fill="rgba(222,79,79,0.36)"/><line x1="1558.5" y1="28" x2="1558.5" y2="630" stroke="rgba(143,143,143,0.30)" stroke-dasharray="1 1"/><rect x="1558" y="26" width="1" height="2" fill="rgba(143,143,143,0.30)"/><rect x="1558" y="628" width="1" height="3" fill="rgba(143,143,143,0.30)"/><line x1="1571.5" y1="28" x2="1571.5" y2="630" stroke="rgba(143,143,143,0.30)" stroke-dasharray="1 1"/><rect x="1571" y="26" width="1" height="2" fill="rgba(143,143,143,0.30)"/><rect x="1571" y="628" width="1" height="3" fill="rgba(143,143,143,0.30)"/><line x1="1585.5" y1="28" x2="1585.5" y2="630" stroke="rgba(143,143,143,0.30)" stroke-dasharray="1 1"/><rect x="1585" y="26" width="1" height="2" fill="rgba(143,143,143,0.30)"/><rect x="1585" y="628" width="1" height="3" fill="rgba(143,143,143,0.30)"/><line x1="1598.5" y1="28" x2="1598.5" y2="630" stroke="rgba(222,79,79,0.36)" stroke-dasharray="1 1"/><rect x="1598" y="26" width="1" height="2" fill="rgba(222,79,79,0.36)"/><rect x="1598" y="628" width="1" height="4" fill="rgba(222,79,79,0.36)"/><line x1="1611.5" y1="28" x2="1611.5" y2="630" stroke="rgba(143,143,143,0.30)" stroke-dasharray="1 1"/><rect x="1611" y="26" width="1" height="2" fill="rgba(143,143,143,0.30)"/><rect x="1611" y="628" width="1" height="3" fill="rgba(143,143,143,0.30)"/><line x1="1625.5" y1="28" x2="1625.5" y2="630" stroke="rgba(143,143,143,0.30)" stroke-dasharray="1 1"/><rect x="1625" y="26" width="1" height="2" fill="rgba(143,143,143,0.30)"/><rect x="1625" y="628" width="1" height="3" fill="rgba(143,143,143,0.30)"/><line x1="1638.5" y1="28" x2="1638.5" y2="630" stroke="rgba(143,143,143,0.30)" stroke-dasharray="1 1"/><rect x="1638" y="26" width="1" height="2" fill="rgba(143,143,143,0.30)"/><rect x="1638" y="628" width="1" height="3" fill="rgba(143,143,143,0.30)"/><line x1="1651.5" y1="28" x2="1651.5" y2="630" stroke="rgba(222,79,79,0.36)" stroke-dasharray="1 1"/><rect x="1651" y="26" width="1" height="2" fill="rgba(222,79,79,0.36)"/><rect x="1651" y="628" width="1" height="4" fill="rgba(222,79,79,0.36)"/><line x1="1665.5" y1="28" x2="1665.5" y2="630" stroke="rgba(143,143,143,0.30)" stroke-dasharray="1 1"/><rect x="1665" y="26" width="1" height="2" fill="rgba(143,143,143,0.30)"/><rect x="1665" y="628" width="1" height="3" fill="rgba(143,143,143,0.30)"/></g>
<rect x="66" y="24" width="1" height="608" fill="#6a6a6a"/>
<rect x="63" y="628" width="3" height="1" fill="#b0b0b0"/><rect x="66" y="628" width="1603" height="1" fill="#000000"/>
<polygon points="1669,625 1669,631 1674,628" fill="#801f1f" shape-rendering="auto"/>
<polygon points="64,26 70,26 67,21" fill="#801f1f" shape-rendering="auto"/>
<text x="847" y="24" font-size="13.43" text-anchor="middle" font-family="Liberation Mono" fill="#000" stroke="#000" stroke-width="0.12">Last 30 Days from 0ea5b771b9ed to VK (HTTP)</text><text x="60" y="631.6" font-size="10.3" text-anchor="end" font-family="Liberation Mono" fill="#000" stroke="#000" stroke-width="0.12">0.0</text><text x="60" y="600.6" font-size="10.3" text-anchor="end" font-family="Liberation Mono" fill="#000" stroke="#000" stroke-width="0.12">0.5</text><text x="60" y="568.6" font-size="10.3" text-anchor="end" font-family="Liberation Mono" fill="#000" stroke="#000" stroke-width="0.12">1.0</text><text x="60" y="537.6" font-size="10.3" text-anchor="end" font-family="Liberation Mono" fill="#000" stroke="#000" stroke-width="0.12">1.5</text><text x="60" y="506.6" font-size="10.3" text-anchor="end" font-family="Liberation Mono" fill="#000" stroke="#000" stroke-width="0.12">2.0</text><text x="60" y="475.6" font-size="10.3" text-anchor="end" font-family="Liberation Mono" fill="#000" stroke="#000" stroke-width="0.12">2.5</text><text x="60" y="443.6" font-size="10.3" text-anchor="end" font-family="Liberation Mono" fill="#000" stroke="#000" stroke-width="0.12">3.0</text><text x="60" y="412.6" font-size="10.3" text-anchor="end" font-family="Liberation Mono" fill="#000" stroke="#000" stroke-width="0.12">3.5</text><text x="60" y="381.6" font-size="10.3" text-anchor="end" font-family="Liberation Mono" fill="#000" stroke="#000" stroke-width="0.12">4.0</text><text x="60" y="350.6" font-size="10.3" text-anchor="end" font-family="Liberation Mono" fill="#000" stroke="#000" stroke-width="0.12">4.5</text><text x="60" y="318.6" font-size="10.3" text-anchor="end" font-family="Liberation Mono" fill="#000" stroke="#000" stroke-width="0.12">5.0</text><text x="60" y="287.6" font-size="10.3" text-anchor="end" font-family="Liberation Mono" fill="#000" stroke="#000" stroke-width="0.12">5.5</text><text x="60" y="256.6" font-size="10.3" text-anchor="end" font-family="Liberation Mono" fill="#000" stroke="#000" stroke-width="0.12">6.0</text><text x="60" y="224.6" font-size="10.3" text-anchor="end" font-family="Liberation Mono" fill="#000" stroke="#000" stroke-width="0.12">6.5</text><text x="60" y="193.6" font-size="10.3" text-anchor="end" font-family="Liberation Mono" fill="#000" stroke="#000" stroke-width="0.12">7.0</text><text x="60" y="162.6" font-size="10.3" text-anchor="end" font-family="Liberation Mono" fill="#000" stroke="#000" stroke-width="0.12">7.5</text><text x="60" y="131.6" font-size="10.3" text-anchor="end" font-family="Liberation Mono" fill="#000" stroke="#000" stroke-width="0.12">8.0</text><text x="60" y="99.6" font-size="10.3" text-anchor="end" font-family="Liberation Mono" fill="#000" stroke="#000" stroke-width="0.12">8.5</text><text x="60" y="68.6" font-size="10.3" text-anchor="end" font-family="Liberation Mono" fill="#000" stroke="#000" stroke-width="0.12">9.0</text><text x="60" y="37.6" font-size="10.3" text-anchor="end" font-family="Liberation Mono" fill="#000" stroke="#000" stroke-width="0.12">9.5</text><text x="78.83" y="640.8" font-size="10.3" text-anchor="middle" font-family="Liberation Mono" fill="#000" stroke="#000" stroke-width="0.12">18 Nov</text><text x="132.17" y="640.8" font-size="10.3" text-anchor="middle" font-family="Liberation Mono" fill="#000" stroke="#000" stroke-width="0.12">19 Nov</text><text x="185.50" y="640.8" font-size="10.3" text-anchor="middle" font-family="Liberation Mono" fill="#000" stroke="#000" stroke-width="0.12">20 Nov</text><text x="238.83" y="640.8" font-size="10.3" text-anchor="middle" font-family="Liberation Mono" fill="#000" stroke="#000" stroke-width="0.12">21 Nov</text><text x="292.17" y="640.8" font-size="10.3" text-anchor="middle" font-family="Liberation Mono" fill="#000" stroke="#000" stroke-width="0.12">22 Nov</text><text x="345.50" y="640.8" font-size="10.3" text-anchor="middle" font-family="Liberation Mono" fill="#000" stroke="#000" stroke-width="0.12">23 Nov</text><text x="398.83" y="640.8" font-size="10.3" text-anchor="middle" font-family="Liberation Mono" fill="#000" stroke="#000" stroke-width="0.12">24 Nov</text><text x="452.17" y="640.8" font-size="10.3" text-anchor="middle" font-family="Liberation Mono" fill="#000" stroke="#000" stroke-width="0.12">25 Nov</text><text x="505.50" y="640.8" font-size="10.3" text-anchor="middle" font-family="Liberation Mono" fill="#000" stroke="#000" stroke-width="0.12">26 Nov</text><text x="558.83" y="640.8" font-size="10.3" text-anchor="middle" font-family="Liberation Mono" fill="#000" stroke="#000" stroke-width="0.12">27 Nov</text><text x="612.17" y="640.8" font-size="10.3" text-anchor="middle" font-family="Liberation Mono" fill="#000" stroke="#000" stroke-width="0.12">28 Nov</text><text x="665.50" y="640.8" font-size="10.3" text-anchor="middle" font-family="Liberation Mono" fill="#000" stroke="#000" stroke-width="0.12">29 Nov</text><text x="718.83" y="640.8" font-size="10.3" text-anchor="middle" font-family="Liberation Mono" fill="#000" stroke="#000" stroke-width="0.12">30 Nov</text><text x="772.17" y="640.8" font-size="10.3" text-anchor="middle" font-family="Liberation Mono" fill="#000" stroke="#000" stroke-width="0.12">01 Dec</text><text x="825.50" y="640.8" font-size="10.3" text-anchor="middle" font-family="Liberation Mono" fill="#000" stroke="#000" stroke-width="0.12">02 Dec</text><text x="878.83" y="640.8" font-size="10.3" text-anchor="middle" font-family="Liberation Mono" fill="#000" stroke="#000" stroke-width="0.12">03 Dec</text><text x="932.17" y="640.8" font-size="10.3" text-anchor="middle" font-family="Liberation Mono" fill="#000" stroke="#000" stroke-width="0.12">04 Dec</text><text x="985.50" y="640.8" font-size="10.3" text-anchor="middle" font-family="Liberation Mono" fill="#000" stroke="#000" stroke-width="0.12">05 Dec</text><text x="1038.83" y="640.8" font-size="10.3" text-anchor="middle" font-family="Liberation Mono" fill="#000" stroke="#000" stroke-width="0.12">06 Dec</text><text x="1092.17" y="640.8" font-size="10.3" text-anchor="middle" font-family="Liberation Mono" fill="#000" stroke="#000" stroke-width="0.12">07 Dec</text><text x="1145.50" y="640.8" font-size="10.3" text-anchor="middle" font-family="Liberation Mono" fill="#000" stroke="#000" stroke-width="0.12">08 Dec</text><text x="1198.83" y="640.8" font-size="10.3" text-anchor="middle" font-family="Liberation Mono" fill="#000" stroke="#000" stroke-width="0.12">09 Dec</text><text x="1252.17" y="640.8" font-size="10.3" text-anchor="middle" font-family="Liberation Mono" fill="#000" stroke="#000" stroke-width="0.12">10 Dec</text><text x="1305.50" y="640.8" font-size="10.3" text-anchor="middle" font-family="Liberation Mono" fill="#000" stroke="#000" stroke-width="0.12">11 Dec</text><text x="1358.83" y="640.8" font-size="10.3" text-anchor="middle" font-family="Liberation Mono" fill="#000" stroke="#000" stroke-width="0.12">12 Dec</text><text x="1412.17" y="640.8" font-size="10.3" text-anchor="middle" font-family="Liberation Mono" fill="#000" stroke="#000" stroke-width="0.12">13 Dec</text><text x="1465.50" y="640.8" font-size="10.3" text-anchor="middle" font-family="Liberation Mono" fill="#000" stroke="#000" stroke-width="0.12">14 Dec</text><text x="1518.83" y="640.8" font-size="10.3" text-anchor="middle" font-family="Liberation Mono" fill="#000" stroke="#000" stroke-width="0.12">15 Dec</text><text x="1572.17" y="640.8" font-size="10.3" text-anchor="middle" font-family="Liberation Mono" fill="#000" stroke="#000" stroke-width="0.12">16 Dec</text><text x="1625.50" y="640.8" font-size="10.3" text-anchor="middle" font-family="Liberation Mono" fill="#000" stroke="#000" stroke-width="0.12">17 Dec</text><text transform="translate(14.3,327.5) rotate(-90)" font-size="11.6" text-anchor="middle" font-family="Liberation Mono" fill="#000" stroke="#000" stroke-width="0.12">Seconds</text><text transform="translate(1685,5) rotate(90)" font-size="8.4" fill="#aaaaaa" font-family="Liberation Mono">RRDTOOL / TOBI OETIKER</text><text x="15.5" y="657.9" font-size="11.78" font-family="Liberation Mono" fill="#000" stroke="#000" stroke-width="0.12" xml:space="preserve">median rtt:</text><text x="106.2" y="657.9" font-size="11.78" font-family="Liberation Mono" fill="#000" stroke="#000" stroke-width="0.12" xml:space="preserve">70.6 ms avg</text><text x="198.8" y="657.9" font-size="11.78" font-family="Liberation Mono" fill="#000" stroke="#000" stroke-width="0.12" xml:space="preserve">10.0  s max</text><text x="292.0" y="657.9" font-size="11.78" font-family="Liberation Mono" fill="#000" stroke="#000" stroke-width="0.12" xml:space="preserve">1.2 ms min</text><text x="378.0" y="657.9" font-size="11.78" font-family="Liberation Mono" fill="#000" stroke="#000" stroke-width="0.12" xml:space="preserve">41.7 ms now</text><text x="471.2" y="657.9" font-size="11.78" font-family="Liberation Mono" fill="#000" stroke="#000" stroke-width="0.12" xml:space="preserve">452.9 ms sd</text><text x="564.0" y="657.9" font-size="11.78" font-family="Liberation Mono" fill="#000" stroke="#000" stroke-width="0.12" xml:space="preserve">155.9 m am/s</text><text x="15.5" y="672.0" font-size="11.78" font-family="Liberation Mono" fill="#000" stroke="#000" stroke-width="0.12" xml:space="preserve">packet loss:</text><text x="106.9" y="672.0" font-size="11.78" font-family="Liberation Mono" fill="#000" stroke="#000" stroke-width="0.12" xml:space="preserve">0.00 % avg</text><text x="192.5" y="672.0" font-size="11.78" font-family="Liberation Mono" fill="#000" stroke="#000" stroke-width="0.12" xml:space="preserve">0.00 % max</text><text x="278.7" y="672.0" font-size="11.78" font-family="Liberation Mono" fill="#000" stroke="#000" stroke-width="0.12" xml:space="preserve">0.00 % min</text><text x="364.5" y="672.0" font-size="11.78" font-family="Liberation Mono" fill="#000" stroke="#000" stroke-width="0.12" xml:space="preserve">0.00 % now</text><text x="15.5" y="686.0" font-size="11.78" font-family="Liberation Mono" fill="#000" stroke="#000" stroke-width="0.12" xml:space="preserve">loss color:</text><text x="15.5" y="700.0" font-size="11.78" font-family="Liberation Mono" fill="#000" stroke="#000" stroke-width="0.12" xml:space="preserve">probe:</text><text x="106.3" y="700.0" font-size="11.78" font-family="Liberation Mono" fill="#000" stroke="#000" stroke-width="0.12" xml:space="preserve">5 URLs using curl(1) every 60s</text><text x="1681.2" y="700" text-anchor="end" font-size="11.78" font-family="Liberation Mono" fill="#000" stroke="#000" stroke-width="0.12" xml:space="preserve">Thu Dec 18 06:21:47 2025</text>
<rect x="108.5" y="677.5" width="8" height="9" fill="#26ff00" stroke="#000" stroke-width="1"/><text x="122.5" y="685.7" font-size="11.78" font-family="Liberation Mono" fill="#000" stroke="#000" stroke-width="0.12" xml:space="preserve">0</text><rect x="145.5" y="677.5" width="8" height="9" fill="#00b8ff" stroke="#000" stroke-width="1"/><text x="159.5" y="685.7" font-size="11.78" font-family="Liberation Mono" fill="#000" stroke="#000" stroke-width="0.12" xml:space="preserve">1</text><rect x="182.5" y="677.5" width="8" height="9" fill="#0059ff" stroke="#000" stroke-width="1"/><text x="196.5" y="685.7" font-size="11.78" font-family="Liberation Mono" fill="#000" stroke="#000" stroke-width="0.12" xml:space="preserve">2</text><rect x="219.5" y="677.5" width="8" height="9" fill="#7e00ff" stroke="#000" stroke-width="1"/><text x="233.5" y="685.7" font-size="11.78" font-family="Liberation Mono" fill="#000" stroke="#000" stroke-width="0.12" xml:space="preserve">3</text><rect x="256.5" y="677.5" width="8" height="9" fill="#ff0000" stroke="#000" stroke-width="1"/><text x="270.5" y="685.7" font-size="11.78" font-family="Liberation Mono" fill="#000" stroke="#000" stroke-width="0.12" xml:space="preserve">4</text><rect x="293.5" y="677.5" width="8" height="9" fill="#a10000" stroke="#000" stroke-width="1"/><text x="307.5" y="685.7" font-size="11.78" font-family="Liberation Mono" fill="#000" stroke="#000" stroke-width="0.12" xml:space="preserve">5/5</text>
</svg></body></html>
